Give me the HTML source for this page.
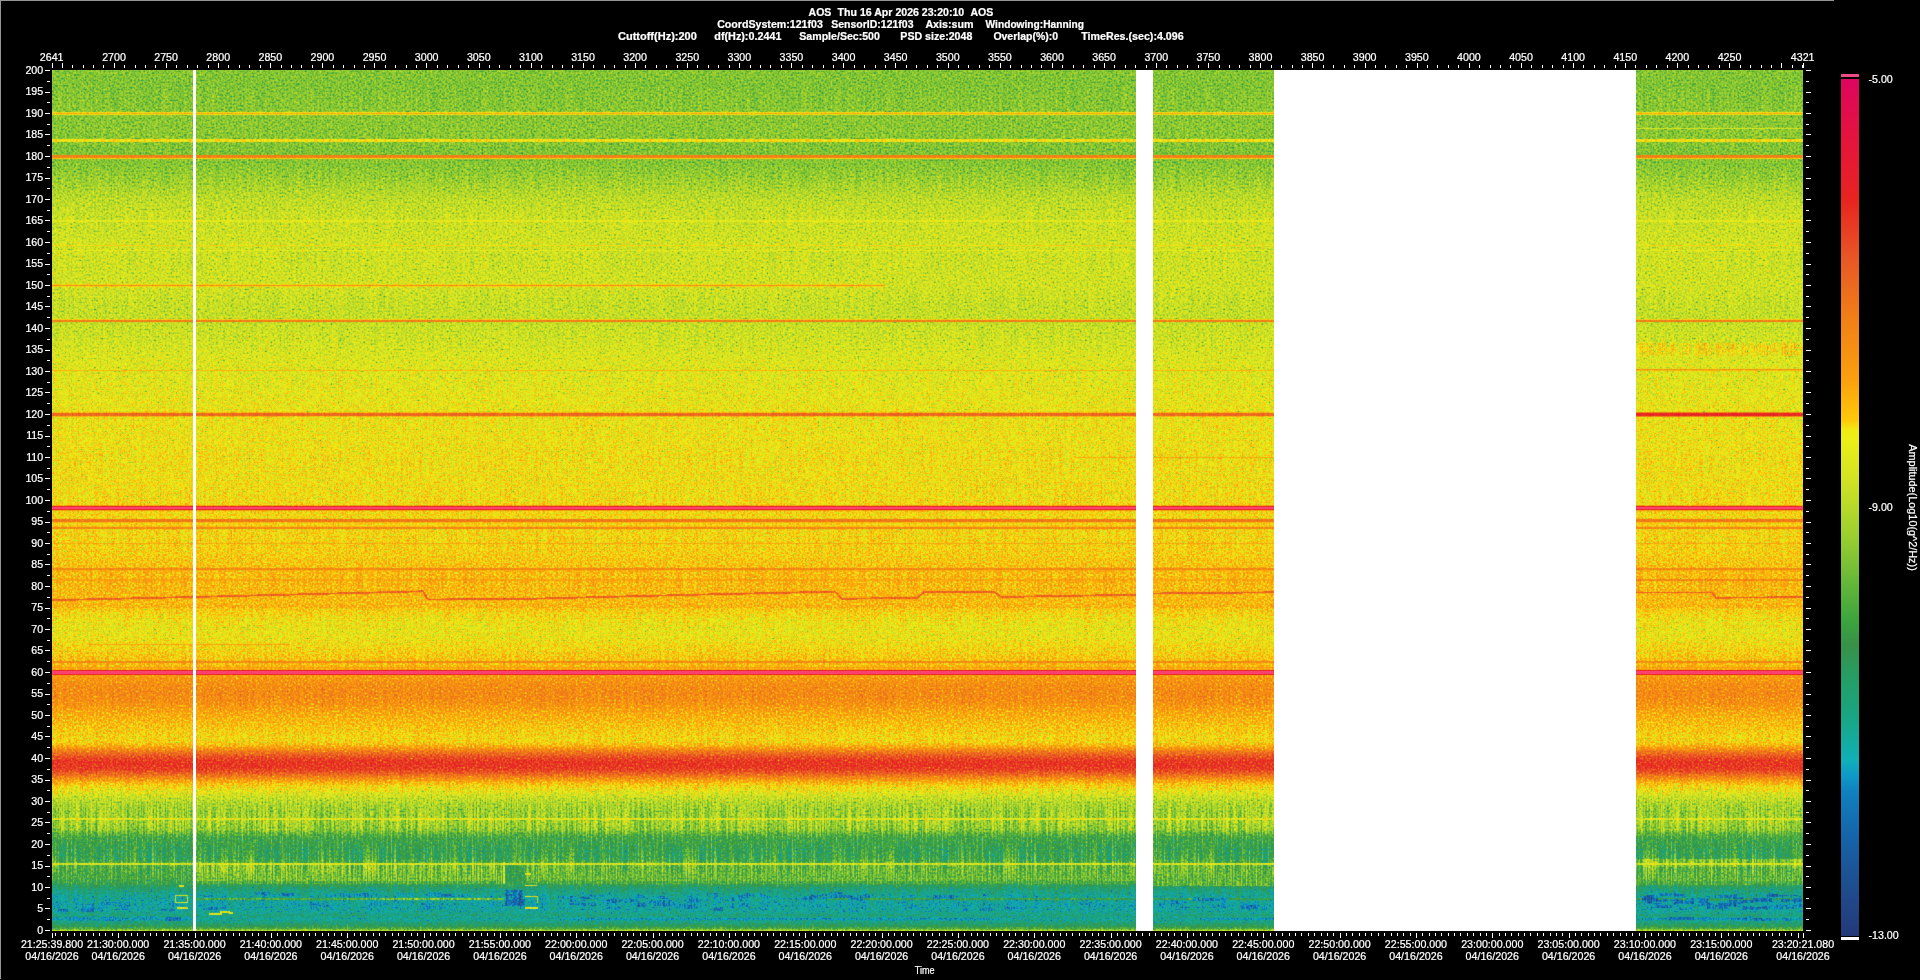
<!DOCTYPE html>
<html lang="en"><head><meta charset="utf-8"><title>AOS Spectrogram 121f03</title>
<style>html,body{margin:0;padding:0;background:#000;overflow:hidden}body{width:1920px;height:980px;position:relative}text{white-space:pre}</style>
</head><body>
<div id="specbg" style="position:absolute;left:52px;top:70px;width:1751px;height:861px;background:linear-gradient(to bottom,#7fc334 0.06%,#78c035 1.56%,#7ec234 3.55%,#82c433 7.05%,#78c035 9.55%,#7fc334 11.05%,#91cb31 12.54%,#a8d32c 14.04%,#b8d929 15.04%,#c5dd27 17.04%,#cce025 20.03%,#c8de26 21.53%,#cadf26 25.03%,#c0dc28 27.03%,#bedb28 29.02%,#c4dd27 30.02%,#cce025 31.52%,#d6e422 33.52%,#dae620 36.02%,#dfe81e 38.01%,#e1e91d 39.51%,#e3ea1c 41.01%,#e5eb1b 43.51%,#e7ec1a 45.01%,#e8ec1a 47.50%,#eaed19 50.00%,#eded17 51.50%,#eeec16 54.00%,#f0eb14 55.99%,#fccf0c 56.99%,#fec10b 57.99%,#fdbb0b 59.49%,#febd0b 60.99%,#fec20b 61.99%,#eeec16 62.98%,#e6eb1b 63.98%,#e1e91d 64.98%,#e3ea1c 65.98%,#e9ed19 66.73%,#efec15 67.48%,#fecc0b 68.48%,#fdba0b 69.48%,#f99d0f 70.48%,#f69212 71.48%,#f58e13 72.47%,#f79411 73.47%,#fba60d 74.47%,#fdba0b 75.47%,#f9d60e 76.47%,#eeed16 77.47%,#efec15 78.07%,#fcac0d 78.57%,#f28515 79.07%,#ea5f23 79.67%,#e84023 80.21%,#e73922 80.71%,#e84524 81.21%,#eb6720 81.71%,#f48c13 82.21%,#fcb40c 82.71%,#eded17 83.21%,#e2e91d 83.71%,#d2e224 84.21%,#bbda29 84.71%,#a7d32d 85.21%,#98ce30 85.96%,#98ce30 86.71%,#9dcf2f 87.01%,#a0d02e 87.31%,#8dc932 88.21%,#54b03b 88.70%,#3a9b43 89.20%,#35934d 90.45%,#379149 91.45%,#3ba040 91.85%,#4ead3c 92.25%,#45a93d 92.95%,#3ba240 93.95%,#329552 94.55%,#1fa276 95.05%,#16a892 95.70%,#13aca6 96.20%,#11aeb0 96.95%,#13aca4 97.69%,#1aa581 98.19%,#13aca3 98.64%,#1da379 99.09%,#2e9858 99.49%,#49ab3c 99.77%,#b1d62b 99.94%)"></div>
<svg id="spec" width="1751" height="861" viewBox="52 70 1751 861" style="position:absolute;left:52px;top:70px;display:block" shape-rendering="crispEdges">
<defs>
<linearGradient id="bg" gradientUnits="userSpaceOnUse" x1="0" y1="70" x2="0" y2="931"><stop offset="0.0006" stop-color="#72800d"/><stop offset="0.0156" stop-color="#70800d"/><stop offset="0.0355" stop-color="#72800d"/><stop offset="0.0705" stop-color="#73800d"/><stop offset="0.0955" stop-color="#70800d"/><stop offset="0.1105" stop-color="#72800d"/><stop offset="0.1254" stop-color="#77800d"/><stop offset="0.1404" stop-color="#7e800d"/><stop offset="0.1504" stop-color="#82800d"/><stop offset="0.1704" stop-color="#86800d"/><stop offset="0.2003" stop-color="#88800d"/><stop offset="0.2153" stop-color="#87800d"/><stop offset="0.2503" stop-color="#88800d"/><stop offset="0.2703" stop-color="#85800d"/><stop offset="0.2902" stop-color="#84800d"/><stop offset="0.3002" stop-color="#86800d"/><stop offset="0.3152" stop-color="#88800d"/><stop offset="0.3352" stop-color="#8c800d"/><stop offset="0.3602" stop-color="#8e800d"/><stop offset="0.3801" stop-color="#90800d"/><stop offset="0.3951" stop-color="#91800d"/><stop offset="0.4101" stop-color="#92800d"/><stop offset="0.4351" stop-color="#93800d"/><stop offset="0.4501" stop-color="#94800d"/><stop offset="0.4750" stop-color="#94800d"/><stop offset="0.5000" stop-color="#95800d"/><stop offset="0.5150" stop-color="#97800d"/><stop offset="0.5400" stop-color="#97800d"/><stop offset="0.5599" stop-color="#99800d"/><stop offset="0.5699" stop-color="#9b800d"/><stop offset="0.5799" stop-color="#9e800d"/><stop offset="0.5949" stop-color="#a0800d"/><stop offset="0.6099" stop-color="#9f800d"/><stop offset="0.6199" stop-color="#9e800d"/><stop offset="0.6298" stop-color="#98800d"/><stop offset="0.6398" stop-color="#93800d"/><stop offset="0.6498" stop-color="#91800d"/><stop offset="0.6598" stop-color="#92800d"/><stop offset="0.6673" stop-color="#95800d"/><stop offset="0.6748" stop-color="#98800d"/><stop offset="0.6848" stop-color="#9c800d"/><stop offset="0.6948" stop-color="#a0800d"/><stop offset="0.7048" stop-color="#aa800d"/><stop offset="0.7148" stop-color="#b0800d"/><stop offset="0.7247" stop-color="#b2800d"/><stop offset="0.7347" stop-color="#af800d"/><stop offset="0.7447" stop-color="#a6800d"/><stop offset="0.7547" stop-color="#a0800d"/><stop offset="0.7647" stop-color="#9b800d"/><stop offset="0.7747" stop-color="#97800d"/><stop offset="0.7807" stop-color="#98800d"/><stop offset="0.7857" stop-color="#a4800d"/><stop offset="0.7907" stop-color="#b7800d"/><stop offset="0.7967" stop-color="#c9800d"/><stop offset="0.8021" stop-color="#d4800d"/><stop offset="0.8071" stop-color="#d6800d"/><stop offset="0.8121" stop-color="#d2800d"/><stop offset="0.8171" stop-color="#c5800d"/><stop offset="0.8221" stop-color="#b3800d"/><stop offset="0.8271" stop-color="#a2800d"/><stop offset="0.8321" stop-color="#978014"/><stop offset="0.8371" stop-color="#91801a"/><stop offset="0.8421" stop-color="#8a8022"/><stop offset="0.8471" stop-color="#838026"/><stop offset="0.8521" stop-color="#7d802b"/><stop offset="0.8596" stop-color="#79802b"/><stop offset="0.8671" stop-color="#79802b"/><stop offset="0.8701" stop-color="#7a802b"/><stop offset="0.8731" stop-color="#7b802b"/><stop offset="0.8821" stop-color="#768030"/><stop offset="0.8870" stop-color="#678034"/><stop offset="0.8920" stop-color="#5d8034"/><stop offset="0.9045" stop-color="#578034"/><stop offset="0.9145" stop-color="#598034"/><stop offset="0.9185" stop-color="#5f8034"/><stop offset="0.9225" stop-color="#658034"/><stop offset="0.9295" stop-color="#638034"/><stop offset="0.9395" stop-color="#5f8034"/><stop offset="0.9455" stop-color="#568030"/><stop offset="0.9505" stop-color="#498020"/><stop offset="0.9570" stop-color="#40801a"/><stop offset="0.9620" stop-color="#3b8017"/><stop offset="0.9695" stop-color="#398017"/><stop offset="0.9769" stop-color="#3c8017"/><stop offset="0.9819" stop-color="#458017"/><stop offset="0.9864" stop-color="#3c8017"/><stop offset="0.9909" stop-color="#488017"/><stop offset="0.9949" stop-color="#548017"/><stop offset="0.9977" stop-color="#648013"/><stop offset="0.9994" stop-color="#808013"/></linearGradient>
<filter id="cm" filterUnits="userSpaceOnUse" x="48" y="66" width="1759" height="869" color-interpolation-filters="sRGB">
<feTurbulence type="fractalNoise" baseFrequency="0.55" numOctaves="1" seed="7" result="t"/>
<feColorMatrix in="t" type="matrix" values="1 0 0 0 0 1 0 0 0 0 1 0 0 0 0 0 0 0 0 1" result="t1"/>
<feComponentTransfer in="t1" result="n"><feFuncR type="table" tableValues="0.2540 0.2540 0.2540 0.2540 0.2540 0.2540 0.2540 0.2540 0.2540 0.2540 0.2540 0.2716 0.3006 0.3200 0.3396 0.3559 0.3712 0.3867 0.4019 0.4141 0.4244 0.4337 0.4416 0.4485 0.4550 0.4611 0.4667 0.4723 0.4780 0.4842 0.4900 0.4954 0.5005 0.5048 0.5096 0.5147 0.5198 0.5241 0.5279 0.5315 0.5354 0.5392 0.5430 0.5469 0.5514 0.5561 0.5612 0.5667 0.5720 0.5764 0.5812 0.5854 0.5903 0.5958 0.6025 0.6025 0.6025 0.6025 0.6025 0.6025 0.6025 0.6025 0.6025 0.6025 0.6025"/><feFuncG type="table" tableValues="0.2540 0.2540 0.2540 0.2540 0.2540 0.2540 0.2540 0.2540 0.2540 0.2540 0.2540 0.2716 0.3006 0.3200 0.3396 0.3559 0.3712 0.3867 0.4019 0.4141 0.4244 0.4337 0.4416 0.4485 0.4550 0.4611 0.4667 0.4723 0.4780 0.4842 0.4900 0.4954 0.5005 0.5048 0.5096 0.5147 0.5198 0.5241 0.5279 0.5315 0.5354 0.5392 0.5430 0.5469 0.5514 0.5561 0.5612 0.5667 0.5720 0.5764 0.5812 0.5854 0.5903 0.5958 0.6025 0.6025 0.6025 0.6025 0.6025 0.6025 0.6025 0.6025 0.6025 0.6025 0.6025"/><feFuncB type="table" tableValues="0.2540 0.2540 0.2540 0.2540 0.2540 0.2540 0.2540 0.2540 0.2540 0.2540 0.2540 0.2716 0.3006 0.3200 0.3396 0.3559 0.3712 0.3867 0.4019 0.4141 0.4244 0.4337 0.4416 0.4485 0.4550 0.4611 0.4667 0.4723 0.4780 0.4842 0.4900 0.4954 0.5005 0.5048 0.5096 0.5147 0.5198 0.5241 0.5279 0.5315 0.5354 0.5392 0.5430 0.5469 0.5514 0.5561 0.5612 0.5667 0.5720 0.5764 0.5812 0.5854 0.5903 0.5958 0.6025 0.6025 0.6025 0.6025 0.6025 0.6025 0.6025 0.6025 0.6025 0.6025 0.6025"/></feComponentTransfer>
<feColorMatrix in="SourceGraphic" type="matrix" values="1 0 0 0 0 1 0 0 0 0 1 0 0 0 0 0 0 0 0 1" result="A"/>
<feColorMatrix in="SourceGraphic" type="matrix" values="0 1 0 0 0 0 1 0 0 0 0 1 0 0 0 0 0 0 0 1" result="G"/>
<feComposite in="G" in2="n" operator="arithmetic" k1="2" k2="-1" k3="0" k4="0.5" result="M"/>
<feComposite in="A" in2="M" operator="arithmetic" k1="0" k2="1" k3="1" k4="-0.5" result="v1"/>
<feTurbulence type="fractalNoise" baseFrequency="0.8 0.025" numOctaves="1" seed="11" result="s0"/>
<feColorMatrix in="s0" type="matrix" values="1 0 0 0 0 1 0 0 0 0 1 0 0 0 0 0 0 0 0 1" result="s"/>
<feColorMatrix in="SourceGraphic" type="matrix" values="0 0 1 0 0 0 0 1 0 0 0 0 1 0 0 0 0 0 0 1" result="Bc"/>
<feComposite in="Bc" in2="s" operator="arithmetic" k1="2" k2="-1" k3="0" k4="0.5" result="S"/>
<feComposite in="v1" in2="S" operator="arithmetic" k1="0" k2="1" k3="1" k4="-0.5" result="v"/>
<feComponentTransfer in="v" result="c"><feFuncR type="table" tableValues="0.141 0.138 0.135 0.131 0.128 0.125 0.122 0.119 0.116 0.113 0.109 0.104 0.099 0.093 0.088 0.083 0.078 0.075 0.073 0.070 0.067 0.065 0.062 0.059 0.055 0.058 0.062 0.066 0.072 0.077 0.082 0.087 0.093 0.100 0.108 0.116 0.124 0.131 0.139 0.153 0.168 0.183 0.198 0.213 0.222 0.226 0.230 0.234 0.258 0.287 0.316 0.345 0.374 0.403 0.433 0.463 0.493 0.523 0.554 0.584 0.611 0.637 0.663 0.689 0.716 0.742 0.768 0.794 0.821 0.839 0.856 0.873 0.890 0.907 0.924 0.935 0.958 0.997 0.997 0.994 0.990 0.987 0.984 0.981 0.977 0.973 0.969 0.965 0.961 0.957 0.953 0.949 0.945 0.941 0.937 0.933 0.929 0.925 0.921 0.918 0.914 0.910 0.909 0.909 0.908 0.908 0.908 0.907 0.907 0.906 0.906 0.904 0.903 0.902 0.901 0.899 0.898 0.897 0.895 0.894 0.891 0.889 0.886 0.884 0.881 0.878 0.876 0.873 0.871"/><feFuncG type="table" tableValues="0.227 0.237 0.247 0.257 0.268 0.278 0.289 0.299 0.310 0.320 0.331 0.344 0.358 0.371 0.384 0.397 0.411 0.428 0.445 0.462 0.479 0.496 0.518 0.562 0.606 0.643 0.680 0.686 0.679 0.672 0.666 0.659 0.653 0.647 0.642 0.637 0.631 0.626 0.621 0.612 0.602 0.593 0.583 0.573 0.580 0.601 0.622 0.643 0.658 0.671 0.684 0.697 0.710 0.723 0.736 0.749 0.763 0.776 0.789 0.802 0.812 0.821 0.830 0.839 0.849 0.858 0.867 0.876 0.885 0.893 0.901 0.909 0.917 0.925 0.933 0.926 0.883 0.791 0.760 0.734 0.707 0.681 0.655 0.629 0.614 0.600 0.586 0.572 0.558 0.544 0.530 0.516 0.502 0.485 0.467 0.450 0.432 0.415 0.397 0.380 0.362 0.344 0.322 0.299 0.276 0.253 0.231 0.208 0.185 0.162 0.141 0.134 0.127 0.120 0.113 0.106 0.099 0.092 0.085 0.078 0.071 0.065 0.058 0.052 0.045 0.039 0.033 0.026 0.020"/><feFuncB type="table" tableValues="0.471 0.484 0.497 0.509 0.521 0.532 0.544 0.555 0.567 0.578 0.590 0.605 0.619 0.634 0.648 0.662 0.677 0.690 0.703 0.716 0.729 0.742 0.756 0.770 0.784 0.758 0.730 0.698 0.665 0.633 0.600 0.567 0.534 0.511 0.491 0.472 0.452 0.432 0.412 0.389 0.365 0.341 0.317 0.293 0.277 0.266 0.256 0.245 0.240 0.236 0.232 0.228 0.224 0.220 0.215 0.210 0.205 0.200 0.194 0.189 0.184 0.178 0.173 0.168 0.163 0.157 0.152 0.147 0.142 0.134 0.126 0.118 0.111 0.103 0.095 0.084 0.067 0.041 0.042 0.044 0.047 0.050 0.052 0.055 0.058 0.062 0.065 0.069 0.072 0.076 0.079 0.083 0.086 0.093 0.100 0.107 0.114 0.121 0.128 0.135 0.142 0.149 0.146 0.144 0.141 0.138 0.136 0.133 0.131 0.128 0.126 0.139 0.151 0.163 0.175 0.188 0.200 0.212 0.224 0.237 0.252 0.267 0.282 0.297 0.312 0.327 0.342 0.357 0.373"/><feFuncA type="linear" slope="0" intercept="1"/></feComponentTransfer>
<feConvolveMatrix order="3" divisor="1" preserveAlpha="true" edgeMode="duplicate" kernelMatrix="0.0250 0.0750 0.0250 0.0750 0.6000 0.0750 0.0250 0.0750 0.0250"/>
</filter>
</defs>
<g filter="url(#cm)">
<rect x="48" y="66" width="1759" height="869" fill="url(#bg)"/>
<rect x="196.0" y="864.64" width="308.0" height="7.31" fill="#728046"/>
<rect x="196.0" y="871.95" width="308.0" height="8.60" fill="#6f8046"/>
<rect x="196.0" y="880.55" width="308.0" height="3.87" fill="#628039"/>
<rect x="504.0" y="864.64" width="770.0" height="15.91" fill="#6a8039"/>
<rect x="504.0" y="880.55" width="770.0" height="3.87" fill="#608033"/>
<rect x="1153.0" y="876.25" width="121.0" height="9.89" fill="#688040"/>
<rect x="1636.0" y="859.48" width="167.0" height="7.74" fill="#738039"/>
<rect x="1636.0" y="867.22" width="167.0" height="13.33" fill="#688046"/>
<rect x="1636.0" y="880.55" width="167.0" height="4.30" fill="#608039"/>
<rect x="196.0" y="898.18" width="169.0" height="1.72" fill="#61661a"/>
<rect x="365.0" y="897.97" width="139.0" height="2.15" fill="#6e8026"/>
<rect x="828.0" y="898.18" width="446.0" height="1.72" fill="#58661a"/>
<rect x="1636.0" y="898.18" width="167.0" height="1.72" fill="#52661a"/>
<rect x="52.0" y="917.53" width="141.0" height="2.58" fill="#30801a"/>
<rect x="560.0" y="917.53" width="440.0" height="2.58" fill="#30801a"/>
<rect x="1200.0" y="917.53" width="74.0" height="2.58" fill="#30801a"/>
<rect x="1640.0" y="917.53" width="163.0" height="2.58" fill="#30801a"/>
<rect x="1636.0" y="342.62" width="167.0" height="13.76" fill="#928026"/>
<rect x="1636.0" y="346.06" width="167.0" height="6.88" fill="#948026"/>
<rect x="960.0" y="481.51" width="314.0" height="6.88" fill="#95801a"/>
<rect x="505.0" y="864.00" width="21.0" height="20.00" fill="#578026"/>
<rect x="503.0" y="862.00" width="2.0" height="22.00" fill="#8b4c13"/>
<rect x="505.0" y="890.00" width="18.0" height="16.00" fill="#24b226"/>
<rect x="525.0" y="873.30" width="6.0" height="1.50" fill="#8f4c13"/>
<rect x="525.0" y="884.50" width="12.0" height="1.50" fill="#8f4c13"/>
<rect x="525.0" y="895.60" width="13.0" height="1.60" fill="#914c13"/>
<rect x="536.5" y="896.00" width="1.5" height="7.00" fill="#8b4c13"/>
<rect x="525.0" y="907.00" width="13.0" height="1.60" fill="#914c13"/>
<rect x="174.5" y="894.60" width="13.5" height="1.40" fill="#8b4c13"/>
<rect x="174.5" y="902.00" width="13.5" height="1.40" fill="#8b4c13"/>
<rect x="174.5" y="895.00" width="1.3" height="8.00" fill="#884c13"/>
<rect x="186.8" y="895.00" width="1.2" height="8.00" fill="#884c13"/>
<rect x="177.0" y="907.00" width="11.0" height="1.50" fill="#8f4c13"/>
<rect x="179.0" y="885.00" width="5.0" height="1.60" fill="#8b4c13"/>
<rect x="209.0" y="912.50" width="13.0" height="2.50" fill="#914c13"/>
<rect x="220.0" y="910.50" width="10.0" height="2.00" fill="#8f4c13"/>
<rect x="229.0" y="912.00" width="4.0" height="1.50" fill="#884c13"/>
<rect x="113.5" y="906.67" width="18.7" height="3.42" fill="#348020"/>
<rect x="57.7" y="909.11" width="11.5" height="2.47" fill="#268020"/>
<rect x="105.0" y="902.25" width="16.1" height="2.06" fill="#278020"/>
<rect x="110.5" y="904.46" width="19.4" height="2.43" fill="#338020"/>
<rect x="160.7" y="909.30" width="14.4" height="2.15" fill="#2a8020"/>
<rect x="157.8" y="903.05" width="19.8" height="2.04" fill="#348020"/>
<rect x="112.9" y="906.77" width="17.0" height="1.51" fill="#318020"/>
<rect x="92.3" y="907.56" width="10.5" height="3.41" fill="#2a8020"/>
<rect x="81.5" y="906.47" width="12.6" height="3.39" fill="#288020"/>
<rect x="81.4" y="909.13" width="13.6" height="2.70" fill="#268020"/>
<rect x="100.4" y="902.36" width="6.5" height="3.50" fill="#2e8020"/>
<rect x="80.1" y="903.88" width="20.9" height="2.82" fill="#2a8020"/>
<rect x="78.9" y="904.67" width="16.6" height="2.60" fill="#338020"/>
<rect x="97.6" y="903.44" width="16.8" height="3.01" fill="#318020"/>
<rect x="100.1" y="916.75" width="11.6" height="3.39" fill="#2a8020"/>
<rect x="136.7" y="916.49" width="21.0" height="3.85" fill="#318020"/>
<rect x="100.5" y="916.98" width="17.1" height="3.51" fill="#2c8020"/>
<rect x="98.9" y="919.14" width="21.3" height="2.26" fill="#2d8020"/>
<rect x="164.9" y="917.21" width="15.7" height="3.72" fill="#248020"/>
<rect x="72.4" y="917.26" width="8.2" height="3.45" fill="#328020"/>
<rect x="68.6" y="917.04" width="19.6" height="3.47" fill="#2f8020"/>
<rect x="65.2" y="916.56" width="13.4" height="2.81" fill="#2f8020"/>
<rect x="200.8" y="894.99" width="12.6" height="1.64" fill="#2e8020"/>
<rect x="336.1" y="893.01" width="20.8" height="3.61" fill="#298020"/>
<rect x="425.7" y="893.88" width="19.6" height="2.30" fill="#2a8020"/>
<rect x="397.9" y="892.91" width="17.5" height="2.69" fill="#338020"/>
<rect x="263.7" y="894.79" width="5.7" height="1.86" fill="#328020"/>
<rect x="461.7" y="893.61" width="8.7" height="2.93" fill="#2d8020"/>
<rect x="429.2" y="892.28" width="12.1" height="3.11" fill="#2d8020"/>
<rect x="436.5" y="894.35" width="17.0" height="2.31" fill="#268020"/>
<rect x="355.4" y="893.49" width="13.6" height="3.22" fill="#2c8020"/>
<rect x="358.0" y="894.02" width="5.9" height="1.61" fill="#268020"/>
<rect x="346.5" y="893.10" width="5.3" height="2.82" fill="#288020"/>
<rect x="342.7" y="893.05" width="13.9" height="2.84" fill="#2f8020"/>
<rect x="255.3" y="892.18" width="14.4" height="3.10" fill="#288020"/>
<rect x="325.4" y="894.35" width="21.2" height="2.20" fill="#328020"/>
<rect x="457.3" y="894.73" width="5.3" height="2.09" fill="#298020"/>
<rect x="256.7" y="893.29" width="9.2" height="1.66" fill="#2b8020"/>
<rect x="279.5" y="893.48" width="14.3" height="2.58" fill="#258020"/>
<rect x="274.2" y="893.71" width="8.4" height="3.24" fill="#2e8020"/>
<rect x="308.6" y="906.07" width="6.6" height="3.72" fill="#368020"/>
<rect x="324.4" y="904.67" width="6.0" height="2.01" fill="#278020"/>
<rect x="373.6" y="902.56" width="20.1" height="2.08" fill="#348020"/>
<rect x="422.4" y="906.22" width="19.5" height="2.44" fill="#2d8020"/>
<rect x="420.6" y="903.26" width="13.6" height="1.75" fill="#2f8020"/>
<rect x="309.4" y="902.63" width="11.6" height="3.75" fill="#308020"/>
<rect x="217.6" y="906.56" width="11.3" height="2.36" fill="#328020"/>
<rect x="331.7" y="907.72" width="6.1" height="2.79" fill="#348020"/>
<rect x="305.8" y="902.38" width="20.6" height="1.82" fill="#348020"/>
<rect x="205.6" y="906.90" width="12.0" height="3.40" fill="#288020"/>
<rect x="507.9" y="901.87" width="13.9" height="2.12" fill="#178020"/>
<rect x="506.4" y="902.85" width="17.3" height="1.67" fill="#1e8020"/>
<rect x="505.4" y="900.36" width="14.6" height="3.19" fill="#1e8020"/>
<rect x="513.4" y="900.38" width="10.0" height="3.12" fill="#1d8020"/>
<rect x="519.3" y="899.34" width="5.9" height="2.37" fill="#1c8020"/>
<rect x="511.3" y="901.23" width="12.9" height="2.85" fill="#1f8020"/>
<rect x="675.1" y="905.01" width="20.1" height="2.69" fill="#248020"/>
<rect x="671.9" y="905.17" width="13.0" height="2.63" fill="#288020"/>
<rect x="666.9" y="902.15" width="9.2" height="2.32" fill="#248020"/>
<rect x="688.7" y="898.20" width="5.2" height="3.87" fill="#2d8020"/>
<rect x="606.2" y="906.96" width="16.2" height="1.95" fill="#2f8020"/>
<rect x="670.9" y="904.33" width="7.7" height="1.94" fill="#248020"/>
<rect x="568.2" y="895.63" width="5.1" height="1.64" fill="#248020"/>
<rect x="590.5" y="902.77" width="5.3" height="3.71" fill="#278020"/>
<rect x="608.2" y="899.38" width="8.5" height="3.81" fill="#278020"/>
<rect x="689.2" y="899.34" width="9.8" height="3.24" fill="#2f8020"/>
<rect x="619.4" y="898.73" width="18.7" height="3.08" fill="#2c8020"/>
<rect x="568.9" y="899.64" width="10.2" height="2.72" fill="#2d8020"/>
<rect x="636.8" y="903.05" width="9.3" height="3.63" fill="#268020"/>
<rect x="654.3" y="902.08" width="21.9" height="3.63" fill="#278020"/>
<rect x="646.6" y="900.92" width="14.9" height="1.71" fill="#288020"/>
<rect x="586.0" y="894.90" width="17.5" height="1.69" fill="#2b8020"/>
<rect x="600.8" y="900.43" width="9.3" height="1.67" fill="#2f8020"/>
<rect x="580.0" y="897.34" width="9.9" height="2.11" fill="#228020"/>
<rect x="567.9" y="902.60" width="20.6" height="2.55" fill="#288020"/>
<rect x="655.5" y="895.92" width="11.5" height="3.23" fill="#298020"/>
<rect x="675.8" y="904.31" width="9.1" height="3.66" fill="#2d8020"/>
<rect x="678.8" y="905.68" width="16.2" height="3.45" fill="#2d8020"/>
<rect x="659.5" y="899.98" width="12.2" height="2.81" fill="#288020"/>
<rect x="636.3" y="895.37" width="9.1" height="3.04" fill="#2d8020"/>
<rect x="603.3" y="901.46" width="7.1" height="2.34" fill="#2d8020"/>
<rect x="560.8" y="895.74" width="17.0" height="3.45" fill="#2f8020"/>
<rect x="822.9" y="896.82" width="10.2" height="2.66" fill="#2a8020"/>
<rect x="746.3" y="895.31" width="19.3" height="2.04" fill="#328020"/>
<rect x="932.9" y="895.15" width="21.0" height="3.52" fill="#298020"/>
<rect x="730.6" y="897.95" width="11.7" height="2.59" fill="#2a8020"/>
<rect x="864.8" y="894.21" width="8.3" height="3.77" fill="#278020"/>
<rect x="763.7" y="895.99" width="10.1" height="1.53" fill="#328020"/>
<rect x="809.4" y="895.68" width="9.8" height="3.25" fill="#318020"/>
<rect x="748.3" y="892.90" width="14.0" height="3.86" fill="#298020"/>
<rect x="848.1" y="897.37" width="15.2" height="2.79" fill="#2c8020"/>
<rect x="829.8" y="895.15" width="21.8" height="3.23" fill="#278020"/>
<rect x="982.4" y="894.45" width="5.1" height="1.98" fill="#288020"/>
<rect x="853.3" y="894.75" width="14.1" height="1.60" fill="#338020"/>
<rect x="717.8" y="896.80" width="13.2" height="3.73" fill="#338020"/>
<rect x="744.3" y="892.93" width="16.6" height="3.62" fill="#318020"/>
<rect x="733.6" y="894.92" width="14.2" height="3.31" fill="#278020"/>
<rect x="831.3" y="892.46" width="11.0" height="3.39" fill="#2e8020"/>
<rect x="795.3" y="898.07" width="19.0" height="1.68" fill="#2e8020"/>
<rect x="820.7" y="894.24" width="11.9" height="2.07" fill="#2c8020"/>
<rect x="906.2" y="895.29" width="9.1" height="3.19" fill="#2e8020"/>
<rect x="804.2" y="895.78" width="7.9" height="3.48" fill="#278020"/>
<rect x="810.8" y="895.37" width="10.2" height="1.97" fill="#2b8020"/>
<rect x="706.6" y="892.56" width="11.8" height="3.12" fill="#2e8020"/>
<rect x="816.8" y="904.46" width="12.6" height="2.56" fill="#2f8020"/>
<rect x="908.3" y="907.35" width="6.6" height="2.33" fill="#348020"/>
<rect x="1003.2" y="907.22" width="20.1" height="1.86" fill="#2e8020"/>
<rect x="905.4" y="907.16" width="16.5" height="1.55" fill="#2f8020"/>
<rect x="911.1" y="907.19" width="5.0" height="1.53" fill="#318020"/>
<rect x="988.7" y="904.46" width="7.0" height="2.37" fill="#2a8020"/>
<rect x="910.8" y="904.51" width="5.0" height="2.31" fill="#2d8020"/>
<rect x="730.2" y="903.44" width="18.6" height="3.13" fill="#2e8020"/>
<rect x="1079.9" y="903.35" width="15.3" height="2.12" fill="#318020"/>
<rect x="1022.6" y="905.82" width="13.3" height="1.65" fill="#328020"/>
<rect x="1087.3" y="904.38" width="19.1" height="2.80" fill="#348020"/>
<rect x="713.5" y="907.76" width="9.0" height="3.51" fill="#288020"/>
<rect x="841.3" y="909.58" width="18.8" height="2.11" fill="#348020"/>
<rect x="963.0" y="908.23" width="5.2" height="2.89" fill="#298020"/>
<rect x="980.0" y="907.85" width="13.3" height="2.92" fill="#2a8020"/>
<rect x="753.5" y="907.75" width="12.0" height="2.68" fill="#2f8020"/>
<rect x="1211.1" y="897.98" width="17.3" height="2.59" fill="#2e8020"/>
<rect x="1262.3" y="907.32" width="5.3" height="2.83" fill="#2d8020"/>
<rect x="1163.9" y="901.18" width="16.1" height="2.66" fill="#338020"/>
<rect x="1173.4" y="901.48" width="6.2" height="2.30" fill="#268020"/>
<rect x="1192.2" y="896.72" width="8.7" height="3.84" fill="#2d8020"/>
<rect x="1239.5" y="905.27" width="18.3" height="3.55" fill="#278020"/>
<rect x="1158.2" y="903.61" width="7.0" height="3.24" fill="#328020"/>
<rect x="1212.7" y="905.42" width="15.6" height="2.25" fill="#2e8020"/>
<rect x="1202.0" y="898.30" width="20.3" height="2.92" fill="#268020"/>
<rect x="1179.6" y="906.67" width="10.7" height="1.76" fill="#2e8020"/>
<rect x="1655.7" y="904.65" width="17.6" height="3.32" fill="#268020"/>
<rect x="1717.4" y="903.33" width="19.4" height="2.65" fill="#238020"/>
<rect x="1728.8" y="896.68" width="15.3" height="2.30" fill="#268020"/>
<rect x="1679.0" y="907.78" width="12.8" height="1.81" fill="#2b8020"/>
<rect x="1754.7" y="898.65" width="6.4" height="3.63" fill="#208020"/>
<rect x="1730.2" y="895.17" width="8.0" height="2.34" fill="#238020"/>
<rect x="1645.5" y="896.82" width="7.1" height="1.61" fill="#1e8020"/>
<rect x="1646.5" y="895.29" width="7.5" height="3.42" fill="#218020"/>
<rect x="1672.9" y="894.03" width="13.0" height="2.63" fill="#278020"/>
<rect x="1728.6" y="899.72" width="9.5" height="3.33" fill="#238020"/>
<rect x="1792.8" y="897.61" width="6.9" height="1.76" fill="#228020"/>
<rect x="1663.3" y="899.32" width="14.5" height="2.06" fill="#2b8020"/>
<rect x="1732.3" y="894.07" width="5.5" height="2.32" fill="#258020"/>
<rect x="1685.4" y="899.99" width="10.2" height="3.76" fill="#248020"/>
<rect x="1641.3" y="896.20" width="5.7" height="1.76" fill="#268020"/>
<rect x="1712.5" y="895.01" width="16.6" height="2.56" fill="#268020"/>
<rect x="1644.6" y="899.86" width="6.7" height="3.09" fill="#268020"/>
<rect x="1766.5" y="893.54" width="12.3" height="3.23" fill="#208020"/>
<rect x="1695.4" y="901.87" width="18.9" height="3.72" fill="#2b8020"/>
<rect x="1672.2" y="902.16" width="12.7" height="1.64" fill="#258020"/>
<rect x="1742.5" y="907.29" width="18.0" height="2.60" fill="#218020"/>
<rect x="1690.9" y="898.72" width="17.9" height="1.53" fill="#298020"/>
<rect x="1753.1" y="898.12" width="18.7" height="3.81" fill="#208020"/>
<rect x="1687.2" y="897.76" width="21.0" height="3.76" fill="#2a8020"/>
<rect x="1680.9" y="899.66" width="20.6" height="1.64" fill="#288020"/>
<rect x="1740.5" y="900.19" width="12.2" height="2.33" fill="#1f8020"/>
<rect x="1642.4" y="897.56" width="15.6" height="3.21" fill="#1e8020"/>
<rect x="1762.2" y="905.71" width="7.3" height="3.36" fill="#228020"/>
<rect x="1791.8" y="899.38" width="10.3" height="2.38" fill="#248020"/>
<rect x="1658.7" y="893.31" width="18.6" height="2.43" fill="#298020"/>
<rect x="1706.9" y="904.80" width="20.3" height="3.82" fill="#258020"/>
<rect x="1788.6" y="903.47" width="14.2" height="3.37" fill="#2b8020"/>
<rect x="1776.0" y="894.70" width="21.7" height="1.51" fill="#1e8020"/>
<rect x="1730.4" y="901.66" width="11.8" height="1.98" fill="#218020"/>
<rect x="1781.3" y="899.01" width="8.3" height="2.62" fill="#1e8020"/>
<rect x="1733.7" y="905.56" width="17.8" height="1.82" fill="#2a8020"/>
<rect x="1647.8" y="902.57" width="15.3" height="1.53" fill="#298020"/>
<rect x="1675.5" y="899.76" width="16.3" height="2.16" fill="#248020"/>
<rect x="1774.1" y="905.25" width="19.4" height="3.45" fill="#2b8020"/>
<rect x="1647.7" y="899.95" width="17.8" height="2.45" fill="#278020"/>
<rect x="1753.3" y="917.89" width="8.6" height="3.08" fill="#268020"/>
<rect x="1701.4" y="917.27" width="8.8" height="3.60" fill="#2d8020"/>
<rect x="1757.7" y="918.89" width="12.9" height="2.16" fill="#288020"/>
<rect x="1738.9" y="917.14" width="11.9" height="3.66" fill="#2e8020"/>
<rect x="1783.8" y="918.32" width="6.8" height="2.94" fill="#2a8020"/>
<rect x="1734.7" y="918.37" width="11.3" height="1.56" fill="#298020"/>
<rect x="1674.5" y="916.74" width="19.1" height="2.98" fill="#228020"/>
<rect x="1732.6" y="919.60" width="16.8" height="1.79" fill="#2c8020"/>
<rect x="1758.7" y="917.61" width="12.4" height="2.60" fill="#268020"/>
<rect x="1668.1" y="916.82" width="12.6" height="3.23" fill="#238020"/>
<rect x="52.0" y="111.70" width="1751.0" height="3.60" fill="#95290d"/>
<rect x="52.0" y="112.60" width="1751.0" height="1.80" fill="#a4290d"/>
<rect x="52.0" y="139.49" width="1751.0" height="2.20" fill="#96290d"/>
<rect x="52.0" y="154.50" width="1751.0" height="4.00" fill="#98290d"/>
<rect x="52.0" y="155.40" width="1751.0" height="2.20" fill="#b6290d"/>
<rect x="52.0" y="220.20" width="1751.0" height="1.60" fill="#90290d"/>
<rect x="52.0" y="244.71" width="1751.0" height="1.60" fill="#97290d"/>
<rect x="52.0" y="249.64" width="1751.0" height="1.20" fill="#91290d"/>
<rect x="52.0" y="284.20" width="833.0" height="2.60" fill="#97290d"/>
<rect x="52.0" y="284.80" width="833.0" height="1.40" fill="#b3290d"/>
<rect x="52.0" y="319.16" width="1751.0" height="3.20" fill="#98290d"/>
<rect x="52.0" y="319.86" width="1751.0" height="1.80" fill="#b8290d"/>
<rect x="52.0" y="369.61" width="1751.0" height="1.20" fill="#9e290d"/>
<rect x="52.0" y="412.30" width="1751.0" height="4.40" fill="#9e290d"/>
<rect x="52.0" y="413.30" width="1751.0" height="2.40" fill="#c2290d"/>
<rect x="52.0" y="518.51" width="1751.0" height="4.40" fill="#9e290d"/>
<rect x="52.0" y="519.21" width="1751.0" height="3.00" fill="#ba290d"/>
<rect x="52.0" y="525.99" width="1751.0" height="3.20" fill="#9d290d"/>
<rect x="52.0" y="526.59" width="1751.0" height="2.00" fill="#b3290d"/>
<rect x="52.0" y="542.90" width="1751.0" height="1.20" fill="#a3290d"/>
<rect x="52.0" y="567.70" width="1751.0" height="3.20" fill="#a1290d"/>
<rect x="52.0" y="568.30" width="1751.0" height="2.00" fill="#b3290d"/>
<rect x="52.0" y="578.80" width="1751.0" height="2.50" fill="#a5290d"/>
<rect x="52.0" y="604.05" width="1751.0" height="3.60" fill="#a1800d"/>
<rect x="90.0" y="643.95" width="200.0" height="1.20" fill="#a4290d"/>
<rect x="52.0" y="660.85" width="1751.0" height="1.80" fill="#b2290d"/>
<rect x="52.0" y="666.69" width="1751.0" height="1.30" fill="#a9290d"/>
<rect x="52.0" y="818.45" width="1751.0" height="1.80" fill="#8f660d"/>
<rect x="52.0" y="862.74" width="1751.0" height="1.80" fill="#8b660d"/>
<rect x="1636.0" y="412.00" width="167.0" height="5.00" fill="#b4290d"/>
<rect x="1636.0" y="412.80" width="167.0" height="3.40" fill="#db290d"/>
<rect x="1636.0" y="368.55" width="167.0" height="1.60" fill="#ae290d"/>
<rect x="1636.0" y="578.62" width="167.0" height="2.00" fill="#b3290d"/>
<rect x="1075.0" y="456.85" width="199.0" height="1.30" fill="#a4290d"/>
<rect x="1300.0" y="127.52" width="503.0" height="1.20" fill="#8b290d"/>
<rect x="52" y="505.00" width="1751" height="6.00" fill="#a4400d"/>
<rect x="52" y="506.00" width="1751" height="4.00" fill="#df260d"/>
<rect x="52" y="669.00" width="1751" height="7.00" fill="#a4400d"/>
<rect x="52" y="670.00" width="1751" height="5.00" fill="#df260d"/>
<polyline points="52.0,600.2 193.0,597.0 423.0,591.3 428.0,599.5 521.0,599.0 700.0,594.6 835.0,591.6 842.0,598.8 917.0,597.8 924.0,592.0 994.0,592.0 1001.0,597.0 1136.0,594.7 1153.0,593.5 1274.0,592.3 1636.0,592.5 1712.0,592.5 1716.0,597.7 1803.0,597.2" fill="none" stroke="#a1590d" stroke-width="3.6"/>
<polyline points="52.0,600.2 193.0,597.0 423.0,591.3 428.0,599.5 521.0,599.0 700.0,594.6 835.0,591.6 842.0,598.8 917.0,597.8 924.0,592.0 994.0,592.0 1001.0,597.0 1136.0,594.7 1153.0,593.5 1274.0,592.3 1636.0,592.5 1712.0,592.5 1716.0,597.7 1803.0,597.2" fill="none" stroke="#c5400d" stroke-width="1.8"/>
</g>
<rect x="52" y="507.00" width="1751" height="2.00" fill="#fc4070"/>
<rect x="52" y="671.00" width="1751" height="3.00" fill="#fc4070"/>
<rect x="193" y="70" width="3" height="861" fill="#fff"/>
<rect x="1136" y="70" width="17" height="861" fill="#fff"/>
<rect x="1274" y="70" width="362" height="861" fill="#fff"/>
</svg>
<div id="cbar" style="position:absolute;left:1841px;top:79px;width:18px;height:857px;background:linear-gradient(to bottom,#de055f 0.00%,#e4143c 7.12%,#e72420 14.12%,#e85826 21.12%,#f18016 28.12%,#faa00e 35.12%,#ffc80a 39.79%,#f0eb14 40.96%,#ecee18 42.12%,#d2e224 46.79%,#96cd30 53.79%,#68b938 58.46%,#3ca53e 63.13%,#389148 66.04%,#249e68 70.13%,#18a686 74.80%,#10b0b8 79.46%,#0e9bc8 81.21%,#1082c0 82.96%,#1468ac 87.63%,#1c5496 92.30%,#224080 98.13%,#243a78 100.00%)"></div>
<svg id="ov" width="1920" height="980" viewBox="0 0 1920 980" style="position:absolute;left:0;top:0;display:block;will-change:transform" font-family="'Liberation Sans', sans-serif" font-size="10.67px" fill="#fff" stroke="#fff" stroke-width="0.22">
<g shape-rendering="crispEdges" stroke="none">
<rect x="0.00" y="0.00" width="1834.00" height="1.00" fill="#969696"/>
<rect x="0.00" y="0.00" width="1.00" height="979.00" fill="#969696"/>
<rect x="52.00" y="63.00" width="1.00" height="5.00" fill="#fff"/>
<rect x="1803.00" y="63.00" width="1.00" height="5.00" fill="#fff"/>
<rect x="62.00" y="63.00" width="1.00" height="5.00" fill="#fff"/>
<rect x="72.00" y="65.00" width="1.00" height="3.00" fill="#fff"/>
<rect x="83.00" y="65.00" width="1.00" height="3.00" fill="#fff"/>
<rect x="93.00" y="65.00" width="1.00" height="3.00" fill="#fff"/>
<rect x="103.00" y="65.00" width="1.00" height="3.00" fill="#fff"/>
<rect x="114.00" y="63.00" width="1.00" height="5.00" fill="#fff"/>
<rect x="124.00" y="65.00" width="1.00" height="3.00" fill="#fff"/>
<rect x="135.00" y="65.00" width="1.00" height="3.00" fill="#fff"/>
<rect x="145.00" y="65.00" width="1.00" height="3.00" fill="#fff"/>
<rect x="155.00" y="65.00" width="1.00" height="3.00" fill="#fff"/>
<rect x="166.00" y="63.00" width="1.00" height="5.00" fill="#fff"/>
<rect x="176.00" y="65.00" width="1.00" height="3.00" fill="#fff"/>
<rect x="187.00" y="65.00" width="1.00" height="3.00" fill="#fff"/>
<rect x="197.00" y="65.00" width="1.00" height="3.00" fill="#fff"/>
<rect x="208.00" y="65.00" width="1.00" height="3.00" fill="#fff"/>
<rect x="218.00" y="63.00" width="1.00" height="5.00" fill="#fff"/>
<rect x="228.00" y="65.00" width="1.00" height="3.00" fill="#fff"/>
<rect x="239.00" y="65.00" width="1.00" height="3.00" fill="#fff"/>
<rect x="249.00" y="65.00" width="1.00" height="3.00" fill="#fff"/>
<rect x="260.00" y="65.00" width="1.00" height="3.00" fill="#fff"/>
<rect x="270.00" y="63.00" width="1.00" height="5.00" fill="#fff"/>
<rect x="281.00" y="65.00" width="1.00" height="3.00" fill="#fff"/>
<rect x="291.00" y="65.00" width="1.00" height="3.00" fill="#fff"/>
<rect x="301.00" y="65.00" width="1.00" height="3.00" fill="#fff"/>
<rect x="312.00" y="65.00" width="1.00" height="3.00" fill="#fff"/>
<rect x="322.00" y="63.00" width="1.00" height="5.00" fill="#fff"/>
<rect x="333.00" y="65.00" width="1.00" height="3.00" fill="#fff"/>
<rect x="343.00" y="65.00" width="1.00" height="3.00" fill="#fff"/>
<rect x="354.00" y="65.00" width="1.00" height="3.00" fill="#fff"/>
<rect x="364.00" y="65.00" width="1.00" height="3.00" fill="#fff"/>
<rect x="374.00" y="63.00" width="1.00" height="5.00" fill="#fff"/>
<rect x="385.00" y="65.00" width="1.00" height="3.00" fill="#fff"/>
<rect x="395.00" y="65.00" width="1.00" height="3.00" fill="#fff"/>
<rect x="406.00" y="65.00" width="1.00" height="3.00" fill="#fff"/>
<rect x="416.00" y="65.00" width="1.00" height="3.00" fill="#fff"/>
<rect x="426.00" y="63.00" width="1.00" height="5.00" fill="#fff"/>
<rect x="437.00" y="65.00" width="1.00" height="3.00" fill="#fff"/>
<rect x="447.00" y="65.00" width="1.00" height="3.00" fill="#fff"/>
<rect x="458.00" y="65.00" width="1.00" height="3.00" fill="#fff"/>
<rect x="468.00" y="65.00" width="1.00" height="3.00" fill="#fff"/>
<rect x="479.00" y="63.00" width="1.00" height="5.00" fill="#fff"/>
<rect x="489.00" y="65.00" width="1.00" height="3.00" fill="#fff"/>
<rect x="499.00" y="65.00" width="1.00" height="3.00" fill="#fff"/>
<rect x="510.00" y="65.00" width="1.00" height="3.00" fill="#fff"/>
<rect x="520.00" y="65.00" width="1.00" height="3.00" fill="#fff"/>
<rect x="531.00" y="63.00" width="1.00" height="5.00" fill="#fff"/>
<rect x="541.00" y="65.00" width="1.00" height="3.00" fill="#fff"/>
<rect x="552.00" y="65.00" width="1.00" height="3.00" fill="#fff"/>
<rect x="562.00" y="65.00" width="1.00" height="3.00" fill="#fff"/>
<rect x="572.00" y="65.00" width="1.00" height="3.00" fill="#fff"/>
<rect x="583.00" y="63.00" width="1.00" height="5.00" fill="#fff"/>
<rect x="593.00" y="65.00" width="1.00" height="3.00" fill="#fff"/>
<rect x="604.00" y="65.00" width="1.00" height="3.00" fill="#fff"/>
<rect x="614.00" y="65.00" width="1.00" height="3.00" fill="#fff"/>
<rect x="625.00" y="65.00" width="1.00" height="3.00" fill="#fff"/>
<rect x="635.00" y="63.00" width="1.00" height="5.00" fill="#fff"/>
<rect x="645.00" y="65.00" width="1.00" height="3.00" fill="#fff"/>
<rect x="656.00" y="65.00" width="1.00" height="3.00" fill="#fff"/>
<rect x="666.00" y="65.00" width="1.00" height="3.00" fill="#fff"/>
<rect x="677.00" y="65.00" width="1.00" height="3.00" fill="#fff"/>
<rect x="687.00" y="63.00" width="1.00" height="5.00" fill="#fff"/>
<rect x="697.00" y="65.00" width="1.00" height="3.00" fill="#fff"/>
<rect x="708.00" y="65.00" width="1.00" height="3.00" fill="#fff"/>
<rect x="718.00" y="65.00" width="1.00" height="3.00" fill="#fff"/>
<rect x="729.00" y="65.00" width="1.00" height="3.00" fill="#fff"/>
<rect x="739.00" y="63.00" width="1.00" height="5.00" fill="#fff"/>
<rect x="750.00" y="65.00" width="1.00" height="3.00" fill="#fff"/>
<rect x="760.00" y="65.00" width="1.00" height="3.00" fill="#fff"/>
<rect x="770.00" y="65.00" width="1.00" height="3.00" fill="#fff"/>
<rect x="781.00" y="65.00" width="1.00" height="3.00" fill="#fff"/>
<rect x="791.00" y="63.00" width="1.00" height="5.00" fill="#fff"/>
<rect x="802.00" y="65.00" width="1.00" height="3.00" fill="#fff"/>
<rect x="812.00" y="65.00" width="1.00" height="3.00" fill="#fff"/>
<rect x="823.00" y="65.00" width="1.00" height="3.00" fill="#fff"/>
<rect x="833.00" y="65.00" width="1.00" height="3.00" fill="#fff"/>
<rect x="843.00" y="63.00" width="1.00" height="5.00" fill="#fff"/>
<rect x="854.00" y="65.00" width="1.00" height="3.00" fill="#fff"/>
<rect x="864.00" y="65.00" width="1.00" height="3.00" fill="#fff"/>
<rect x="875.00" y="65.00" width="1.00" height="3.00" fill="#fff"/>
<rect x="885.00" y="65.00" width="1.00" height="3.00" fill="#fff"/>
<rect x="895.00" y="63.00" width="1.00" height="5.00" fill="#fff"/>
<rect x="906.00" y="65.00" width="1.00" height="3.00" fill="#fff"/>
<rect x="916.00" y="65.00" width="1.00" height="3.00" fill="#fff"/>
<rect x="927.00" y="65.00" width="1.00" height="3.00" fill="#fff"/>
<rect x="937.00" y="65.00" width="1.00" height="3.00" fill="#fff"/>
<rect x="948.00" y="63.00" width="1.00" height="5.00" fill="#fff"/>
<rect x="958.00" y="65.00" width="1.00" height="3.00" fill="#fff"/>
<rect x="968.00" y="65.00" width="1.00" height="3.00" fill="#fff"/>
<rect x="979.00" y="65.00" width="1.00" height="3.00" fill="#fff"/>
<rect x="989.00" y="65.00" width="1.00" height="3.00" fill="#fff"/>
<rect x="1000.00" y="63.00" width="1.00" height="5.00" fill="#fff"/>
<rect x="1010.00" y="65.00" width="1.00" height="3.00" fill="#fff"/>
<rect x="1021.00" y="65.00" width="1.00" height="3.00" fill="#fff"/>
<rect x="1031.00" y="65.00" width="1.00" height="3.00" fill="#fff"/>
<rect x="1041.00" y="65.00" width="1.00" height="3.00" fill="#fff"/>
<rect x="1052.00" y="63.00" width="1.00" height="5.00" fill="#fff"/>
<rect x="1062.00" y="65.00" width="1.00" height="3.00" fill="#fff"/>
<rect x="1073.00" y="65.00" width="1.00" height="3.00" fill="#fff"/>
<rect x="1083.00" y="65.00" width="1.00" height="3.00" fill="#fff"/>
<rect x="1094.00" y="65.00" width="1.00" height="3.00" fill="#fff"/>
<rect x="1104.00" y="63.00" width="1.00" height="5.00" fill="#fff"/>
<rect x="1114.00" y="65.00" width="1.00" height="3.00" fill="#fff"/>
<rect x="1125.00" y="65.00" width="1.00" height="3.00" fill="#fff"/>
<rect x="1135.00" y="65.00" width="1.00" height="3.00" fill="#fff"/>
<rect x="1146.00" y="65.00" width="1.00" height="3.00" fill="#fff"/>
<rect x="1156.00" y="63.00" width="1.00" height="5.00" fill="#fff"/>
<rect x="1166.00" y="65.00" width="1.00" height="3.00" fill="#fff"/>
<rect x="1177.00" y="65.00" width="1.00" height="3.00" fill="#fff"/>
<rect x="1187.00" y="65.00" width="1.00" height="3.00" fill="#fff"/>
<rect x="1198.00" y="65.00" width="1.00" height="3.00" fill="#fff"/>
<rect x="1208.00" y="63.00" width="1.00" height="5.00" fill="#fff"/>
<rect x="1219.00" y="65.00" width="1.00" height="3.00" fill="#fff"/>
<rect x="1229.00" y="65.00" width="1.00" height="3.00" fill="#fff"/>
<rect x="1239.00" y="65.00" width="1.00" height="3.00" fill="#fff"/>
<rect x="1250.00" y="65.00" width="1.00" height="3.00" fill="#fff"/>
<rect x="1260.00" y="63.00" width="1.00" height="5.00" fill="#fff"/>
<rect x="1271.00" y="65.00" width="1.00" height="3.00" fill="#fff"/>
<rect x="1281.00" y="65.00" width="1.00" height="3.00" fill="#fff"/>
<rect x="1292.00" y="65.00" width="1.00" height="3.00" fill="#fff"/>
<rect x="1302.00" y="65.00" width="1.00" height="3.00" fill="#fff"/>
<rect x="1312.00" y="63.00" width="1.00" height="5.00" fill="#fff"/>
<rect x="1323.00" y="65.00" width="1.00" height="3.00" fill="#fff"/>
<rect x="1333.00" y="65.00" width="1.00" height="3.00" fill="#fff"/>
<rect x="1344.00" y="65.00" width="1.00" height="3.00" fill="#fff"/>
<rect x="1354.00" y="65.00" width="1.00" height="3.00" fill="#fff"/>
<rect x="1365.00" y="63.00" width="1.00" height="5.00" fill="#fff"/>
<rect x="1375.00" y="65.00" width="1.00" height="3.00" fill="#fff"/>
<rect x="1385.00" y="65.00" width="1.00" height="3.00" fill="#fff"/>
<rect x="1396.00" y="65.00" width="1.00" height="3.00" fill="#fff"/>
<rect x="1406.00" y="65.00" width="1.00" height="3.00" fill="#fff"/>
<rect x="1417.00" y="63.00" width="1.00" height="5.00" fill="#fff"/>
<rect x="1427.00" y="65.00" width="1.00" height="3.00" fill="#fff"/>
<rect x="1437.00" y="65.00" width="1.00" height="3.00" fill="#fff"/>
<rect x="1448.00" y="65.00" width="1.00" height="3.00" fill="#fff"/>
<rect x="1458.00" y="65.00" width="1.00" height="3.00" fill="#fff"/>
<rect x="1469.00" y="63.00" width="1.00" height="5.00" fill="#fff"/>
<rect x="1479.00" y="65.00" width="1.00" height="3.00" fill="#fff"/>
<rect x="1490.00" y="65.00" width="1.00" height="3.00" fill="#fff"/>
<rect x="1500.00" y="65.00" width="1.00" height="3.00" fill="#fff"/>
<rect x="1510.00" y="65.00" width="1.00" height="3.00" fill="#fff"/>
<rect x="1521.00" y="63.00" width="1.00" height="5.00" fill="#fff"/>
<rect x="1531.00" y="65.00" width="1.00" height="3.00" fill="#fff"/>
<rect x="1542.00" y="65.00" width="1.00" height="3.00" fill="#fff"/>
<rect x="1552.00" y="65.00" width="1.00" height="3.00" fill="#fff"/>
<rect x="1563.00" y="65.00" width="1.00" height="3.00" fill="#fff"/>
<rect x="1573.00" y="63.00" width="1.00" height="5.00" fill="#fff"/>
<rect x="1583.00" y="65.00" width="1.00" height="3.00" fill="#fff"/>
<rect x="1594.00" y="65.00" width="1.00" height="3.00" fill="#fff"/>
<rect x="1604.00" y="65.00" width="1.00" height="3.00" fill="#fff"/>
<rect x="1615.00" y="65.00" width="1.00" height="3.00" fill="#fff"/>
<rect x="1625.00" y="63.00" width="1.00" height="5.00" fill="#fff"/>
<rect x="1635.00" y="65.00" width="1.00" height="3.00" fill="#fff"/>
<rect x="1646.00" y="65.00" width="1.00" height="3.00" fill="#fff"/>
<rect x="1656.00" y="65.00" width="1.00" height="3.00" fill="#fff"/>
<rect x="1667.00" y="65.00" width="1.00" height="3.00" fill="#fff"/>
<rect x="1677.00" y="63.00" width="1.00" height="5.00" fill="#fff"/>
<rect x="1688.00" y="65.00" width="1.00" height="3.00" fill="#fff"/>
<rect x="1698.00" y="65.00" width="1.00" height="3.00" fill="#fff"/>
<rect x="1708.00" y="65.00" width="1.00" height="3.00" fill="#fff"/>
<rect x="1719.00" y="65.00" width="1.00" height="3.00" fill="#fff"/>
<rect x="1729.00" y="63.00" width="1.00" height="5.00" fill="#fff"/>
<rect x="1740.00" y="65.00" width="1.00" height="3.00" fill="#fff"/>
<rect x="1750.00" y="65.00" width="1.00" height="3.00" fill="#fff"/>
<rect x="1761.00" y="65.00" width="1.00" height="3.00" fill="#fff"/>
<rect x="1771.00" y="65.00" width="1.00" height="3.00" fill="#fff"/>
<rect x="1781.00" y="63.00" width="1.00" height="5.00" fill="#fff"/>
<rect x="1792.00" y="65.00" width="1.00" height="3.00" fill="#fff"/>
<rect x="1802.00" y="65.00" width="1.00" height="3.00" fill="#fff"/>
<rect x="45.00" y="930.00" width="5.00" height="1.00" fill="#fff"/>
<rect x="1806.00" y="930.00" width="5.00" height="1.00" fill="#fff"/>
<rect x="47.00" y="919.00" width="3.00" height="1.00" fill="#fff"/>
<rect x="1806.00" y="919.00" width="3.00" height="1.00" fill="#fff"/>
<rect x="45.00" y="908.00" width="5.00" height="1.00" fill="#fff"/>
<rect x="1806.00" y="908.00" width="5.00" height="1.00" fill="#fff"/>
<rect x="47.00" y="898.00" width="3.00" height="1.00" fill="#fff"/>
<rect x="1806.00" y="898.00" width="3.00" height="1.00" fill="#fff"/>
<rect x="45.00" y="887.00" width="5.00" height="1.00" fill="#fff"/>
<rect x="1806.00" y="887.00" width="5.00" height="1.00" fill="#fff"/>
<rect x="47.00" y="876.00" width="3.00" height="1.00" fill="#fff"/>
<rect x="1806.00" y="876.00" width="3.00" height="1.00" fill="#fff"/>
<rect x="45.00" y="866.00" width="5.00" height="1.00" fill="#fff"/>
<rect x="1806.00" y="866.00" width="5.00" height="1.00" fill="#fff"/>
<rect x="47.00" y="855.00" width="3.00" height="1.00" fill="#fff"/>
<rect x="1806.00" y="855.00" width="3.00" height="1.00" fill="#fff"/>
<rect x="45.00" y="844.00" width="5.00" height="1.00" fill="#fff"/>
<rect x="1806.00" y="844.00" width="5.00" height="1.00" fill="#fff"/>
<rect x="47.00" y="833.00" width="3.00" height="1.00" fill="#fff"/>
<rect x="1806.00" y="833.00" width="3.00" height="1.00" fill="#fff"/>
<rect x="45.00" y="822.00" width="5.00" height="1.00" fill="#fff"/>
<rect x="1806.00" y="822.00" width="5.00" height="1.00" fill="#fff"/>
<rect x="47.00" y="812.00" width="3.00" height="1.00" fill="#fff"/>
<rect x="1806.00" y="812.00" width="3.00" height="1.00" fill="#fff"/>
<rect x="45.00" y="801.00" width="5.00" height="1.00" fill="#fff"/>
<rect x="1806.00" y="801.00" width="5.00" height="1.00" fill="#fff"/>
<rect x="47.00" y="790.00" width="3.00" height="1.00" fill="#fff"/>
<rect x="1806.00" y="790.00" width="3.00" height="1.00" fill="#fff"/>
<rect x="45.00" y="780.00" width="5.00" height="1.00" fill="#fff"/>
<rect x="1806.00" y="780.00" width="5.00" height="1.00" fill="#fff"/>
<rect x="47.00" y="769.00" width="3.00" height="1.00" fill="#fff"/>
<rect x="1806.00" y="769.00" width="3.00" height="1.00" fill="#fff"/>
<rect x="45.00" y="758.00" width="5.00" height="1.00" fill="#fff"/>
<rect x="1806.00" y="758.00" width="5.00" height="1.00" fill="#fff"/>
<rect x="47.00" y="747.00" width="3.00" height="1.00" fill="#fff"/>
<rect x="1806.00" y="747.00" width="3.00" height="1.00" fill="#fff"/>
<rect x="45.00" y="736.00" width="5.00" height="1.00" fill="#fff"/>
<rect x="1806.00" y="736.00" width="5.00" height="1.00" fill="#fff"/>
<rect x="47.00" y="726.00" width="3.00" height="1.00" fill="#fff"/>
<rect x="1806.00" y="726.00" width="3.00" height="1.00" fill="#fff"/>
<rect x="45.00" y="715.00" width="5.00" height="1.00" fill="#fff"/>
<rect x="1806.00" y="715.00" width="5.00" height="1.00" fill="#fff"/>
<rect x="47.00" y="704.00" width="3.00" height="1.00" fill="#fff"/>
<rect x="1806.00" y="704.00" width="3.00" height="1.00" fill="#fff"/>
<rect x="45.00" y="694.00" width="5.00" height="1.00" fill="#fff"/>
<rect x="1806.00" y="694.00" width="5.00" height="1.00" fill="#fff"/>
<rect x="47.00" y="683.00" width="3.00" height="1.00" fill="#fff"/>
<rect x="1806.00" y="683.00" width="3.00" height="1.00" fill="#fff"/>
<rect x="45.00" y="672.00" width="5.00" height="1.00" fill="#fff"/>
<rect x="1806.00" y="672.00" width="5.00" height="1.00" fill="#fff"/>
<rect x="47.00" y="661.00" width="3.00" height="1.00" fill="#fff"/>
<rect x="1806.00" y="661.00" width="3.00" height="1.00" fill="#fff"/>
<rect x="45.00" y="650.00" width="5.00" height="1.00" fill="#fff"/>
<rect x="1806.00" y="650.00" width="5.00" height="1.00" fill="#fff"/>
<rect x="47.00" y="640.00" width="3.00" height="1.00" fill="#fff"/>
<rect x="1806.00" y="640.00" width="3.00" height="1.00" fill="#fff"/>
<rect x="45.00" y="629.00" width="5.00" height="1.00" fill="#fff"/>
<rect x="1806.00" y="629.00" width="5.00" height="1.00" fill="#fff"/>
<rect x="47.00" y="618.00" width="3.00" height="1.00" fill="#fff"/>
<rect x="1806.00" y="618.00" width="3.00" height="1.00" fill="#fff"/>
<rect x="45.00" y="608.00" width="5.00" height="1.00" fill="#fff"/>
<rect x="1806.00" y="608.00" width="5.00" height="1.00" fill="#fff"/>
<rect x="47.00" y="597.00" width="3.00" height="1.00" fill="#fff"/>
<rect x="1806.00" y="597.00" width="3.00" height="1.00" fill="#fff"/>
<rect x="45.00" y="586.00" width="5.00" height="1.00" fill="#fff"/>
<rect x="1806.00" y="586.00" width="5.00" height="1.00" fill="#fff"/>
<rect x="47.00" y="575.00" width="3.00" height="1.00" fill="#fff"/>
<rect x="1806.00" y="575.00" width="3.00" height="1.00" fill="#fff"/>
<rect x="45.00" y="564.00" width="5.00" height="1.00" fill="#fff"/>
<rect x="1806.00" y="564.00" width="5.00" height="1.00" fill="#fff"/>
<rect x="47.00" y="554.00" width="3.00" height="1.00" fill="#fff"/>
<rect x="1806.00" y="554.00" width="3.00" height="1.00" fill="#fff"/>
<rect x="45.00" y="543.00" width="5.00" height="1.00" fill="#fff"/>
<rect x="1806.00" y="543.00" width="5.00" height="1.00" fill="#fff"/>
<rect x="47.00" y="532.00" width="3.00" height="1.00" fill="#fff"/>
<rect x="1806.00" y="532.00" width="3.00" height="1.00" fill="#fff"/>
<rect x="45.00" y="522.00" width="5.00" height="1.00" fill="#fff"/>
<rect x="1806.00" y="522.00" width="5.00" height="1.00" fill="#fff"/>
<rect x="47.00" y="511.00" width="3.00" height="1.00" fill="#fff"/>
<rect x="1806.00" y="511.00" width="3.00" height="1.00" fill="#fff"/>
<rect x="45.00" y="500.00" width="5.00" height="1.00" fill="#fff"/>
<rect x="1806.00" y="500.00" width="5.00" height="1.00" fill="#fff"/>
<rect x="47.00" y="489.00" width="3.00" height="1.00" fill="#fff"/>
<rect x="1806.00" y="489.00" width="3.00" height="1.00" fill="#fff"/>
<rect x="45.00" y="478.00" width="5.00" height="1.00" fill="#fff"/>
<rect x="1806.00" y="478.00" width="5.00" height="1.00" fill="#fff"/>
<rect x="47.00" y="468.00" width="3.00" height="1.00" fill="#fff"/>
<rect x="1806.00" y="468.00" width="3.00" height="1.00" fill="#fff"/>
<rect x="45.00" y="457.00" width="5.00" height="1.00" fill="#fff"/>
<rect x="1806.00" y="457.00" width="5.00" height="1.00" fill="#fff"/>
<rect x="47.00" y="446.00" width="3.00" height="1.00" fill="#fff"/>
<rect x="1806.00" y="446.00" width="3.00" height="1.00" fill="#fff"/>
<rect x="45.00" y="436.00" width="5.00" height="1.00" fill="#fff"/>
<rect x="1806.00" y="436.00" width="5.00" height="1.00" fill="#fff"/>
<rect x="47.00" y="425.00" width="3.00" height="1.00" fill="#fff"/>
<rect x="1806.00" y="425.00" width="3.00" height="1.00" fill="#fff"/>
<rect x="45.00" y="414.00" width="5.00" height="1.00" fill="#fff"/>
<rect x="1806.00" y="414.00" width="5.00" height="1.00" fill="#fff"/>
<rect x="47.00" y="403.00" width="3.00" height="1.00" fill="#fff"/>
<rect x="1806.00" y="403.00" width="3.00" height="1.00" fill="#fff"/>
<rect x="45.00" y="392.00" width="5.00" height="1.00" fill="#fff"/>
<rect x="1806.00" y="392.00" width="5.00" height="1.00" fill="#fff"/>
<rect x="47.00" y="382.00" width="3.00" height="1.00" fill="#fff"/>
<rect x="1806.00" y="382.00" width="3.00" height="1.00" fill="#fff"/>
<rect x="45.00" y="371.00" width="5.00" height="1.00" fill="#fff"/>
<rect x="1806.00" y="371.00" width="5.00" height="1.00" fill="#fff"/>
<rect x="47.00" y="360.00" width="3.00" height="1.00" fill="#fff"/>
<rect x="1806.00" y="360.00" width="3.00" height="1.00" fill="#fff"/>
<rect x="45.00" y="350.00" width="5.00" height="1.00" fill="#fff"/>
<rect x="1806.00" y="350.00" width="5.00" height="1.00" fill="#fff"/>
<rect x="47.00" y="339.00" width="3.00" height="1.00" fill="#fff"/>
<rect x="1806.00" y="339.00" width="3.00" height="1.00" fill="#fff"/>
<rect x="45.00" y="328.00" width="5.00" height="1.00" fill="#fff"/>
<rect x="1806.00" y="328.00" width="5.00" height="1.00" fill="#fff"/>
<rect x="47.00" y="317.00" width="3.00" height="1.00" fill="#fff"/>
<rect x="1806.00" y="317.00" width="3.00" height="1.00" fill="#fff"/>
<rect x="45.00" y="306.00" width="5.00" height="1.00" fill="#fff"/>
<rect x="1806.00" y="306.00" width="5.00" height="1.00" fill="#fff"/>
<rect x="47.00" y="296.00" width="3.00" height="1.00" fill="#fff"/>
<rect x="1806.00" y="296.00" width="3.00" height="1.00" fill="#fff"/>
<rect x="45.00" y="285.00" width="5.00" height="1.00" fill="#fff"/>
<rect x="1806.00" y="285.00" width="5.00" height="1.00" fill="#fff"/>
<rect x="47.00" y="274.00" width="3.00" height="1.00" fill="#fff"/>
<rect x="1806.00" y="274.00" width="3.00" height="1.00" fill="#fff"/>
<rect x="45.00" y="264.00" width="5.00" height="1.00" fill="#fff"/>
<rect x="1806.00" y="264.00" width="5.00" height="1.00" fill="#fff"/>
<rect x="47.00" y="253.00" width="3.00" height="1.00" fill="#fff"/>
<rect x="1806.00" y="253.00" width="3.00" height="1.00" fill="#fff"/>
<rect x="45.00" y="242.00" width="5.00" height="1.00" fill="#fff"/>
<rect x="1806.00" y="242.00" width="5.00" height="1.00" fill="#fff"/>
<rect x="47.00" y="231.00" width="3.00" height="1.00" fill="#fff"/>
<rect x="1806.00" y="231.00" width="3.00" height="1.00" fill="#fff"/>
<rect x="45.00" y="220.00" width="5.00" height="1.00" fill="#fff"/>
<rect x="1806.00" y="220.00" width="5.00" height="1.00" fill="#fff"/>
<rect x="47.00" y="210.00" width="3.00" height="1.00" fill="#fff"/>
<rect x="1806.00" y="210.00" width="3.00" height="1.00" fill="#fff"/>
<rect x="45.00" y="199.00" width="5.00" height="1.00" fill="#fff"/>
<rect x="1806.00" y="199.00" width="5.00" height="1.00" fill="#fff"/>
<rect x="47.00" y="188.00" width="3.00" height="1.00" fill="#fff"/>
<rect x="1806.00" y="188.00" width="3.00" height="1.00" fill="#fff"/>
<rect x="45.00" y="178.00" width="5.00" height="1.00" fill="#fff"/>
<rect x="1806.00" y="178.00" width="5.00" height="1.00" fill="#fff"/>
<rect x="47.00" y="167.00" width="3.00" height="1.00" fill="#fff"/>
<rect x="1806.00" y="167.00" width="3.00" height="1.00" fill="#fff"/>
<rect x="45.00" y="156.00" width="5.00" height="1.00" fill="#fff"/>
<rect x="1806.00" y="156.00" width="5.00" height="1.00" fill="#fff"/>
<rect x="47.00" y="145.00" width="3.00" height="1.00" fill="#fff"/>
<rect x="1806.00" y="145.00" width="3.00" height="1.00" fill="#fff"/>
<rect x="45.00" y="134.00" width="5.00" height="1.00" fill="#fff"/>
<rect x="1806.00" y="134.00" width="5.00" height="1.00" fill="#fff"/>
<rect x="47.00" y="124.00" width="3.00" height="1.00" fill="#fff"/>
<rect x="1806.00" y="124.00" width="3.00" height="1.00" fill="#fff"/>
<rect x="45.00" y="113.00" width="5.00" height="1.00" fill="#fff"/>
<rect x="1806.00" y="113.00" width="5.00" height="1.00" fill="#fff"/>
<rect x="47.00" y="102.00" width="3.00" height="1.00" fill="#fff"/>
<rect x="1806.00" y="102.00" width="3.00" height="1.00" fill="#fff"/>
<rect x="45.00" y="92.00" width="5.00" height="1.00" fill="#fff"/>
<rect x="1806.00" y="92.00" width="5.00" height="1.00" fill="#fff"/>
<rect x="47.00" y="81.00" width="3.00" height="1.00" fill="#fff"/>
<rect x="1806.00" y="81.00" width="3.00" height="1.00" fill="#fff"/>
<rect x="45.00" y="70.00" width="5.00" height="1.00" fill="#fff"/>
<rect x="1806.00" y="70.00" width="5.00" height="1.00" fill="#fff"/>
<rect x="52.00" y="933.00" width="1.00" height="5.00" fill="#fff"/>
<rect x="1803.00" y="933.00" width="1.00" height="5.00" fill="#fff"/>
<rect x="55.00" y="933.00" width="1.00" height="3.00" fill="#fff"/>
<rect x="61.00" y="933.00" width="1.00" height="3.00" fill="#fff"/>
<rect x="67.00" y="933.00" width="1.00" height="3.00" fill="#fff"/>
<rect x="74.00" y="933.00" width="1.00" height="3.00" fill="#fff"/>
<rect x="80.00" y="933.00" width="1.00" height="3.00" fill="#fff"/>
<rect x="86.00" y="933.00" width="1.00" height="3.00" fill="#fff"/>
<rect x="93.00" y="933.00" width="1.00" height="3.00" fill="#fff"/>
<rect x="99.00" y="933.00" width="1.00" height="3.00" fill="#fff"/>
<rect x="105.00" y="933.00" width="1.00" height="3.00" fill="#fff"/>
<rect x="112.00" y="933.00" width="1.00" height="3.00" fill="#fff"/>
<rect x="118.00" y="933.00" width="1.00" height="5.00" fill="#fff"/>
<rect x="125.00" y="933.00" width="1.00" height="3.00" fill="#fff"/>
<rect x="131.00" y="933.00" width="1.00" height="3.00" fill="#fff"/>
<rect x="137.00" y="933.00" width="1.00" height="3.00" fill="#fff"/>
<rect x="144.00" y="933.00" width="1.00" height="3.00" fill="#fff"/>
<rect x="150.00" y="933.00" width="1.00" height="3.00" fill="#fff"/>
<rect x="156.00" y="933.00" width="1.00" height="3.00" fill="#fff"/>
<rect x="163.00" y="933.00" width="1.00" height="3.00" fill="#fff"/>
<rect x="169.00" y="933.00" width="1.00" height="3.00" fill="#fff"/>
<rect x="175.00" y="933.00" width="1.00" height="3.00" fill="#fff"/>
<rect x="182.00" y="933.00" width="1.00" height="3.00" fill="#fff"/>
<rect x="188.00" y="933.00" width="1.00" height="3.00" fill="#fff"/>
<rect x="195.00" y="933.00" width="1.00" height="5.00" fill="#fff"/>
<rect x="201.00" y="933.00" width="1.00" height="3.00" fill="#fff"/>
<rect x="207.00" y="933.00" width="1.00" height="3.00" fill="#fff"/>
<rect x="214.00" y="933.00" width="1.00" height="3.00" fill="#fff"/>
<rect x="220.00" y="933.00" width="1.00" height="3.00" fill="#fff"/>
<rect x="226.00" y="933.00" width="1.00" height="3.00" fill="#fff"/>
<rect x="233.00" y="933.00" width="1.00" height="3.00" fill="#fff"/>
<rect x="239.00" y="933.00" width="1.00" height="3.00" fill="#fff"/>
<rect x="245.00" y="933.00" width="1.00" height="3.00" fill="#fff"/>
<rect x="252.00" y="933.00" width="1.00" height="3.00" fill="#fff"/>
<rect x="258.00" y="933.00" width="1.00" height="3.00" fill="#fff"/>
<rect x="265.00" y="933.00" width="1.00" height="3.00" fill="#fff"/>
<rect x="271.00" y="933.00" width="1.00" height="5.00" fill="#fff"/>
<rect x="277.00" y="933.00" width="1.00" height="3.00" fill="#fff"/>
<rect x="284.00" y="933.00" width="1.00" height="3.00" fill="#fff"/>
<rect x="290.00" y="933.00" width="1.00" height="3.00" fill="#fff"/>
<rect x="296.00" y="933.00" width="1.00" height="3.00" fill="#fff"/>
<rect x="303.00" y="933.00" width="1.00" height="3.00" fill="#fff"/>
<rect x="309.00" y="933.00" width="1.00" height="3.00" fill="#fff"/>
<rect x="315.00" y="933.00" width="1.00" height="3.00" fill="#fff"/>
<rect x="322.00" y="933.00" width="1.00" height="3.00" fill="#fff"/>
<rect x="328.00" y="933.00" width="1.00" height="3.00" fill="#fff"/>
<rect x="334.00" y="933.00" width="1.00" height="3.00" fill="#fff"/>
<rect x="341.00" y="933.00" width="1.00" height="3.00" fill="#fff"/>
<rect x="347.00" y="933.00" width="1.00" height="5.00" fill="#fff"/>
<rect x="354.00" y="933.00" width="1.00" height="3.00" fill="#fff"/>
<rect x="360.00" y="933.00" width="1.00" height="3.00" fill="#fff"/>
<rect x="366.00" y="933.00" width="1.00" height="3.00" fill="#fff"/>
<rect x="373.00" y="933.00" width="1.00" height="3.00" fill="#fff"/>
<rect x="379.00" y="933.00" width="1.00" height="3.00" fill="#fff"/>
<rect x="385.00" y="933.00" width="1.00" height="3.00" fill="#fff"/>
<rect x="392.00" y="933.00" width="1.00" height="3.00" fill="#fff"/>
<rect x="398.00" y="933.00" width="1.00" height="3.00" fill="#fff"/>
<rect x="404.00" y="933.00" width="1.00" height="3.00" fill="#fff"/>
<rect x="411.00" y="933.00" width="1.00" height="3.00" fill="#fff"/>
<rect x="417.00" y="933.00" width="1.00" height="3.00" fill="#fff"/>
<rect x="424.00" y="933.00" width="1.00" height="5.00" fill="#fff"/>
<rect x="430.00" y="933.00" width="1.00" height="3.00" fill="#fff"/>
<rect x="436.00" y="933.00" width="1.00" height="3.00" fill="#fff"/>
<rect x="443.00" y="933.00" width="1.00" height="3.00" fill="#fff"/>
<rect x="449.00" y="933.00" width="1.00" height="3.00" fill="#fff"/>
<rect x="455.00" y="933.00" width="1.00" height="3.00" fill="#fff"/>
<rect x="462.00" y="933.00" width="1.00" height="3.00" fill="#fff"/>
<rect x="468.00" y="933.00" width="1.00" height="3.00" fill="#fff"/>
<rect x="474.00" y="933.00" width="1.00" height="3.00" fill="#fff"/>
<rect x="481.00" y="933.00" width="1.00" height="3.00" fill="#fff"/>
<rect x="487.00" y="933.00" width="1.00" height="3.00" fill="#fff"/>
<rect x="494.00" y="933.00" width="1.00" height="3.00" fill="#fff"/>
<rect x="500.00" y="933.00" width="1.00" height="5.00" fill="#fff"/>
<rect x="506.00" y="933.00" width="1.00" height="3.00" fill="#fff"/>
<rect x="513.00" y="933.00" width="1.00" height="3.00" fill="#fff"/>
<rect x="519.00" y="933.00" width="1.00" height="3.00" fill="#fff"/>
<rect x="525.00" y="933.00" width="1.00" height="3.00" fill="#fff"/>
<rect x="532.00" y="933.00" width="1.00" height="3.00" fill="#fff"/>
<rect x="538.00" y="933.00" width="1.00" height="3.00" fill="#fff"/>
<rect x="544.00" y="933.00" width="1.00" height="3.00" fill="#fff"/>
<rect x="551.00" y="933.00" width="1.00" height="3.00" fill="#fff"/>
<rect x="557.00" y="933.00" width="1.00" height="3.00" fill="#fff"/>
<rect x="564.00" y="933.00" width="1.00" height="3.00" fill="#fff"/>
<rect x="570.00" y="933.00" width="1.00" height="3.00" fill="#fff"/>
<rect x="576.00" y="933.00" width="1.00" height="5.00" fill="#fff"/>
<rect x="583.00" y="933.00" width="1.00" height="3.00" fill="#fff"/>
<rect x="589.00" y="933.00" width="1.00" height="3.00" fill="#fff"/>
<rect x="595.00" y="933.00" width="1.00" height="3.00" fill="#fff"/>
<rect x="602.00" y="933.00" width="1.00" height="3.00" fill="#fff"/>
<rect x="608.00" y="933.00" width="1.00" height="3.00" fill="#fff"/>
<rect x="614.00" y="933.00" width="1.00" height="3.00" fill="#fff"/>
<rect x="621.00" y="933.00" width="1.00" height="3.00" fill="#fff"/>
<rect x="627.00" y="933.00" width="1.00" height="3.00" fill="#fff"/>
<rect x="633.00" y="933.00" width="1.00" height="3.00" fill="#fff"/>
<rect x="640.00" y="933.00" width="1.00" height="3.00" fill="#fff"/>
<rect x="646.00" y="933.00" width="1.00" height="3.00" fill="#fff"/>
<rect x="653.00" y="933.00" width="1.00" height="5.00" fill="#fff"/>
<rect x="659.00" y="933.00" width="1.00" height="3.00" fill="#fff"/>
<rect x="665.00" y="933.00" width="1.00" height="3.00" fill="#fff"/>
<rect x="672.00" y="933.00" width="1.00" height="3.00" fill="#fff"/>
<rect x="678.00" y="933.00" width="1.00" height="3.00" fill="#fff"/>
<rect x="684.00" y="933.00" width="1.00" height="3.00" fill="#fff"/>
<rect x="691.00" y="933.00" width="1.00" height="3.00" fill="#fff"/>
<rect x="697.00" y="933.00" width="1.00" height="3.00" fill="#fff"/>
<rect x="703.00" y="933.00" width="1.00" height="3.00" fill="#fff"/>
<rect x="710.00" y="933.00" width="1.00" height="3.00" fill="#fff"/>
<rect x="716.00" y="933.00" width="1.00" height="3.00" fill="#fff"/>
<rect x="723.00" y="933.00" width="1.00" height="3.00" fill="#fff"/>
<rect x="729.00" y="933.00" width="1.00" height="5.00" fill="#fff"/>
<rect x="735.00" y="933.00" width="1.00" height="3.00" fill="#fff"/>
<rect x="742.00" y="933.00" width="1.00" height="3.00" fill="#fff"/>
<rect x="748.00" y="933.00" width="1.00" height="3.00" fill="#fff"/>
<rect x="754.00" y="933.00" width="1.00" height="3.00" fill="#fff"/>
<rect x="761.00" y="933.00" width="1.00" height="3.00" fill="#fff"/>
<rect x="767.00" y="933.00" width="1.00" height="3.00" fill="#fff"/>
<rect x="773.00" y="933.00" width="1.00" height="3.00" fill="#fff"/>
<rect x="780.00" y="933.00" width="1.00" height="3.00" fill="#fff"/>
<rect x="786.00" y="933.00" width="1.00" height="3.00" fill="#fff"/>
<rect x="793.00" y="933.00" width="1.00" height="3.00" fill="#fff"/>
<rect x="799.00" y="933.00" width="1.00" height="3.00" fill="#fff"/>
<rect x="805.00" y="933.00" width="1.00" height="5.00" fill="#fff"/>
<rect x="812.00" y="933.00" width="1.00" height="3.00" fill="#fff"/>
<rect x="818.00" y="933.00" width="1.00" height="3.00" fill="#fff"/>
<rect x="824.00" y="933.00" width="1.00" height="3.00" fill="#fff"/>
<rect x="831.00" y="933.00" width="1.00" height="3.00" fill="#fff"/>
<rect x="837.00" y="933.00" width="1.00" height="3.00" fill="#fff"/>
<rect x="843.00" y="933.00" width="1.00" height="3.00" fill="#fff"/>
<rect x="850.00" y="933.00" width="1.00" height="3.00" fill="#fff"/>
<rect x="856.00" y="933.00" width="1.00" height="3.00" fill="#fff"/>
<rect x="863.00" y="933.00" width="1.00" height="3.00" fill="#fff"/>
<rect x="869.00" y="933.00" width="1.00" height="3.00" fill="#fff"/>
<rect x="875.00" y="933.00" width="1.00" height="3.00" fill="#fff"/>
<rect x="882.00" y="933.00" width="1.00" height="5.00" fill="#fff"/>
<rect x="888.00" y="933.00" width="1.00" height="3.00" fill="#fff"/>
<rect x="894.00" y="933.00" width="1.00" height="3.00" fill="#fff"/>
<rect x="901.00" y="933.00" width="1.00" height="3.00" fill="#fff"/>
<rect x="907.00" y="933.00" width="1.00" height="3.00" fill="#fff"/>
<rect x="913.00" y="933.00" width="1.00" height="3.00" fill="#fff"/>
<rect x="920.00" y="933.00" width="1.00" height="3.00" fill="#fff"/>
<rect x="926.00" y="933.00" width="1.00" height="3.00" fill="#fff"/>
<rect x="932.00" y="933.00" width="1.00" height="3.00" fill="#fff"/>
<rect x="939.00" y="933.00" width="1.00" height="3.00" fill="#fff"/>
<rect x="945.00" y="933.00" width="1.00" height="3.00" fill="#fff"/>
<rect x="952.00" y="933.00" width="1.00" height="3.00" fill="#fff"/>
<rect x="958.00" y="933.00" width="1.00" height="5.00" fill="#fff"/>
<rect x="964.00" y="933.00" width="1.00" height="3.00" fill="#fff"/>
<rect x="971.00" y="933.00" width="1.00" height="3.00" fill="#fff"/>
<rect x="977.00" y="933.00" width="1.00" height="3.00" fill="#fff"/>
<rect x="983.00" y="933.00" width="1.00" height="3.00" fill="#fff"/>
<rect x="990.00" y="933.00" width="1.00" height="3.00" fill="#fff"/>
<rect x="996.00" y="933.00" width="1.00" height="3.00" fill="#fff"/>
<rect x="1002.00" y="933.00" width="1.00" height="3.00" fill="#fff"/>
<rect x="1009.00" y="933.00" width="1.00" height="3.00" fill="#fff"/>
<rect x="1015.00" y="933.00" width="1.00" height="3.00" fill="#fff"/>
<rect x="1022.00" y="933.00" width="1.00" height="3.00" fill="#fff"/>
<rect x="1028.00" y="933.00" width="1.00" height="3.00" fill="#fff"/>
<rect x="1034.00" y="933.00" width="1.00" height="5.00" fill="#fff"/>
<rect x="1041.00" y="933.00" width="1.00" height="3.00" fill="#fff"/>
<rect x="1047.00" y="933.00" width="1.00" height="3.00" fill="#fff"/>
<rect x="1053.00" y="933.00" width="1.00" height="3.00" fill="#fff"/>
<rect x="1060.00" y="933.00" width="1.00" height="3.00" fill="#fff"/>
<rect x="1066.00" y="933.00" width="1.00" height="3.00" fill="#fff"/>
<rect x="1072.00" y="933.00" width="1.00" height="3.00" fill="#fff"/>
<rect x="1079.00" y="933.00" width="1.00" height="3.00" fill="#fff"/>
<rect x="1085.00" y="933.00" width="1.00" height="3.00" fill="#fff"/>
<rect x="1092.00" y="933.00" width="1.00" height="3.00" fill="#fff"/>
<rect x="1098.00" y="933.00" width="1.00" height="3.00" fill="#fff"/>
<rect x="1104.00" y="933.00" width="1.00" height="3.00" fill="#fff"/>
<rect x="1111.00" y="933.00" width="1.00" height="5.00" fill="#fff"/>
<rect x="1117.00" y="933.00" width="1.00" height="3.00" fill="#fff"/>
<rect x="1123.00" y="933.00" width="1.00" height="3.00" fill="#fff"/>
<rect x="1130.00" y="933.00" width="1.00" height="3.00" fill="#fff"/>
<rect x="1136.00" y="933.00" width="1.00" height="3.00" fill="#fff"/>
<rect x="1142.00" y="933.00" width="1.00" height="3.00" fill="#fff"/>
<rect x="1149.00" y="933.00" width="1.00" height="3.00" fill="#fff"/>
<rect x="1155.00" y="933.00" width="1.00" height="3.00" fill="#fff"/>
<rect x="1161.00" y="933.00" width="1.00" height="3.00" fill="#fff"/>
<rect x="1168.00" y="933.00" width="1.00" height="3.00" fill="#fff"/>
<rect x="1174.00" y="933.00" width="1.00" height="3.00" fill="#fff"/>
<rect x="1181.00" y="933.00" width="1.00" height="3.00" fill="#fff"/>
<rect x="1187.00" y="933.00" width="1.00" height="5.00" fill="#fff"/>
<rect x="1193.00" y="933.00" width="1.00" height="3.00" fill="#fff"/>
<rect x="1200.00" y="933.00" width="1.00" height="3.00" fill="#fff"/>
<rect x="1206.00" y="933.00" width="1.00" height="3.00" fill="#fff"/>
<rect x="1212.00" y="933.00" width="1.00" height="3.00" fill="#fff"/>
<rect x="1219.00" y="933.00" width="1.00" height="3.00" fill="#fff"/>
<rect x="1225.00" y="933.00" width="1.00" height="3.00" fill="#fff"/>
<rect x="1231.00" y="933.00" width="1.00" height="3.00" fill="#fff"/>
<rect x="1238.00" y="933.00" width="1.00" height="3.00" fill="#fff"/>
<rect x="1244.00" y="933.00" width="1.00" height="3.00" fill="#fff"/>
<rect x="1251.00" y="933.00" width="1.00" height="3.00" fill="#fff"/>
<rect x="1257.00" y="933.00" width="1.00" height="3.00" fill="#fff"/>
<rect x="1263.00" y="933.00" width="1.00" height="5.00" fill="#fff"/>
<rect x="1270.00" y="933.00" width="1.00" height="3.00" fill="#fff"/>
<rect x="1276.00" y="933.00" width="1.00" height="3.00" fill="#fff"/>
<rect x="1282.00" y="933.00" width="1.00" height="3.00" fill="#fff"/>
<rect x="1289.00" y="933.00" width="1.00" height="3.00" fill="#fff"/>
<rect x="1295.00" y="933.00" width="1.00" height="3.00" fill="#fff"/>
<rect x="1301.00" y="933.00" width="1.00" height="3.00" fill="#fff"/>
<rect x="1308.00" y="933.00" width="1.00" height="3.00" fill="#fff"/>
<rect x="1314.00" y="933.00" width="1.00" height="3.00" fill="#fff"/>
<rect x="1321.00" y="933.00" width="1.00" height="3.00" fill="#fff"/>
<rect x="1327.00" y="933.00" width="1.00" height="3.00" fill="#fff"/>
<rect x="1333.00" y="933.00" width="1.00" height="3.00" fill="#fff"/>
<rect x="1340.00" y="933.00" width="1.00" height="5.00" fill="#fff"/>
<rect x="1346.00" y="933.00" width="1.00" height="3.00" fill="#fff"/>
<rect x="1352.00" y="933.00" width="1.00" height="3.00" fill="#fff"/>
<rect x="1359.00" y="933.00" width="1.00" height="3.00" fill="#fff"/>
<rect x="1365.00" y="933.00" width="1.00" height="3.00" fill="#fff"/>
<rect x="1371.00" y="933.00" width="1.00" height="3.00" fill="#fff"/>
<rect x="1378.00" y="933.00" width="1.00" height="3.00" fill="#fff"/>
<rect x="1384.00" y="933.00" width="1.00" height="3.00" fill="#fff"/>
<rect x="1391.00" y="933.00" width="1.00" height="3.00" fill="#fff"/>
<rect x="1397.00" y="933.00" width="1.00" height="3.00" fill="#fff"/>
<rect x="1403.00" y="933.00" width="1.00" height="3.00" fill="#fff"/>
<rect x="1410.00" y="933.00" width="1.00" height="3.00" fill="#fff"/>
<rect x="1416.00" y="933.00" width="1.00" height="5.00" fill="#fff"/>
<rect x="1422.00" y="933.00" width="1.00" height="3.00" fill="#fff"/>
<rect x="1429.00" y="933.00" width="1.00" height="3.00" fill="#fff"/>
<rect x="1435.00" y="933.00" width="1.00" height="3.00" fill="#fff"/>
<rect x="1441.00" y="933.00" width="1.00" height="3.00" fill="#fff"/>
<rect x="1448.00" y="933.00" width="1.00" height="3.00" fill="#fff"/>
<rect x="1454.00" y="933.00" width="1.00" height="3.00" fill="#fff"/>
<rect x="1460.00" y="933.00" width="1.00" height="3.00" fill="#fff"/>
<rect x="1467.00" y="933.00" width="1.00" height="3.00" fill="#fff"/>
<rect x="1473.00" y="933.00" width="1.00" height="3.00" fill="#fff"/>
<rect x="1480.00" y="933.00" width="1.00" height="3.00" fill="#fff"/>
<rect x="1486.00" y="933.00" width="1.00" height="3.00" fill="#fff"/>
<rect x="1492.00" y="933.00" width="1.00" height="5.00" fill="#fff"/>
<rect x="1499.00" y="933.00" width="1.00" height="3.00" fill="#fff"/>
<rect x="1505.00" y="933.00" width="1.00" height="3.00" fill="#fff"/>
<rect x="1511.00" y="933.00" width="1.00" height="3.00" fill="#fff"/>
<rect x="1518.00" y="933.00" width="1.00" height="3.00" fill="#fff"/>
<rect x="1524.00" y="933.00" width="1.00" height="3.00" fill="#fff"/>
<rect x="1530.00" y="933.00" width="1.00" height="3.00" fill="#fff"/>
<rect x="1537.00" y="933.00" width="1.00" height="3.00" fill="#fff"/>
<rect x="1543.00" y="933.00" width="1.00" height="3.00" fill="#fff"/>
<rect x="1550.00" y="933.00" width="1.00" height="3.00" fill="#fff"/>
<rect x="1556.00" y="933.00" width="1.00" height="3.00" fill="#fff"/>
<rect x="1562.00" y="933.00" width="1.00" height="3.00" fill="#fff"/>
<rect x="1569.00" y="933.00" width="1.00" height="5.00" fill="#fff"/>
<rect x="1575.00" y="933.00" width="1.00" height="3.00" fill="#fff"/>
<rect x="1581.00" y="933.00" width="1.00" height="3.00" fill="#fff"/>
<rect x="1588.00" y="933.00" width="1.00" height="3.00" fill="#fff"/>
<rect x="1594.00" y="933.00" width="1.00" height="3.00" fill="#fff"/>
<rect x="1600.00" y="933.00" width="1.00" height="3.00" fill="#fff"/>
<rect x="1607.00" y="933.00" width="1.00" height="3.00" fill="#fff"/>
<rect x="1613.00" y="933.00" width="1.00" height="3.00" fill="#fff"/>
<rect x="1620.00" y="933.00" width="1.00" height="3.00" fill="#fff"/>
<rect x="1626.00" y="933.00" width="1.00" height="3.00" fill="#fff"/>
<rect x="1632.00" y="933.00" width="1.00" height="3.00" fill="#fff"/>
<rect x="1639.00" y="933.00" width="1.00" height="3.00" fill="#fff"/>
<rect x="1645.00" y="933.00" width="1.00" height="5.00" fill="#fff"/>
<rect x="1651.00" y="933.00" width="1.00" height="3.00" fill="#fff"/>
<rect x="1658.00" y="933.00" width="1.00" height="3.00" fill="#fff"/>
<rect x="1664.00" y="933.00" width="1.00" height="3.00" fill="#fff"/>
<rect x="1670.00" y="933.00" width="1.00" height="3.00" fill="#fff"/>
<rect x="1677.00" y="933.00" width="1.00" height="3.00" fill="#fff"/>
<rect x="1683.00" y="933.00" width="1.00" height="3.00" fill="#fff"/>
<rect x="1689.00" y="933.00" width="1.00" height="3.00" fill="#fff"/>
<rect x="1696.00" y="933.00" width="1.00" height="3.00" fill="#fff"/>
<rect x="1702.00" y="933.00" width="1.00" height="3.00" fill="#fff"/>
<rect x="1709.00" y="933.00" width="1.00" height="3.00" fill="#fff"/>
<rect x="1715.00" y="933.00" width="1.00" height="3.00" fill="#fff"/>
<rect x="1721.00" y="933.00" width="1.00" height="5.00" fill="#fff"/>
<rect x="1728.00" y="933.00" width="1.00" height="3.00" fill="#fff"/>
<rect x="1734.00" y="933.00" width="1.00" height="3.00" fill="#fff"/>
<rect x="1740.00" y="933.00" width="1.00" height="3.00" fill="#fff"/>
<rect x="1747.00" y="933.00" width="1.00" height="3.00" fill="#fff"/>
<rect x="1753.00" y="933.00" width="1.00" height="3.00" fill="#fff"/>
<rect x="1759.00" y="933.00" width="1.00" height="3.00" fill="#fff"/>
<rect x="1766.00" y="933.00" width="1.00" height="3.00" fill="#fff"/>
<rect x="1772.00" y="933.00" width="1.00" height="3.00" fill="#fff"/>
<rect x="1779.00" y="933.00" width="1.00" height="3.00" fill="#fff"/>
<rect x="1785.00" y="933.00" width="1.00" height="3.00" fill="#fff"/>
<rect x="1791.00" y="933.00" width="1.00" height="3.00" fill="#fff"/>
<rect x="1798.00" y="933.00" width="1.00" height="5.00" fill="#fff"/>
<rect x="1841.00" y="74.00" width="18.00" height="3.00" fill="#ee4a86"/>
<rect x="1841.00" y="937.00" width="18.00" height="3.00" fill="#ffffff"/>
</g>
<text x="51.70" y="61.00" text-anchor="middle">2641</text>
<text x="113.99" y="61.00" text-anchor="middle">2700</text>
<text x="166.11" y="61.00" text-anchor="middle">2750</text>
<text x="218.22" y="61.00" text-anchor="middle">2800</text>
<text x="270.33" y="61.00" text-anchor="middle">2850</text>
<text x="322.45" y="61.00" text-anchor="middle">2900</text>
<text x="374.56" y="61.00" text-anchor="middle">2950</text>
<text x="426.67" y="61.00" text-anchor="middle">3000</text>
<text x="478.79" y="61.00" text-anchor="middle">3050</text>
<text x="530.90" y="61.00" text-anchor="middle">3100</text>
<text x="583.01" y="61.00" text-anchor="middle">3150</text>
<text x="635.12" y="61.00" text-anchor="middle">3200</text>
<text x="687.24" y="61.00" text-anchor="middle">3250</text>
<text x="739.35" y="61.00" text-anchor="middle">3300</text>
<text x="791.46" y="61.00" text-anchor="middle">3350</text>
<text x="843.58" y="61.00" text-anchor="middle">3400</text>
<text x="895.69" y="61.00" text-anchor="middle">3450</text>
<text x="947.80" y="61.00" text-anchor="middle">3500</text>
<text x="999.92" y="61.00" text-anchor="middle">3550</text>
<text x="1052.03" y="61.00" text-anchor="middle">3600</text>
<text x="1104.14" y="61.00" text-anchor="middle">3650</text>
<text x="1156.26" y="61.00" text-anchor="middle">3700</text>
<text x="1208.37" y="61.00" text-anchor="middle">3750</text>
<text x="1260.48" y="61.00" text-anchor="middle">3800</text>
<text x="1312.59" y="61.00" text-anchor="middle">3850</text>
<text x="1364.71" y="61.00" text-anchor="middle">3900</text>
<text x="1416.82" y="61.00" text-anchor="middle">3950</text>
<text x="1468.93" y="61.00" text-anchor="middle">4000</text>
<text x="1521.05" y="61.00" text-anchor="middle">4050</text>
<text x="1573.16" y="61.00" text-anchor="middle">4100</text>
<text x="1625.27" y="61.00" text-anchor="middle">4150</text>
<text x="1677.39" y="61.00" text-anchor="middle">4200</text>
<text x="1729.50" y="61.00" text-anchor="middle">4250</text>
<text x="1802.70" y="61.00" text-anchor="middle">4321</text>
<text x="43.20" y="933.90" text-anchor="end">0</text>
<text x="43.20" y="912.40" text-anchor="end">5</text>
<text x="43.20" y="890.90" text-anchor="end">10</text>
<text x="43.20" y="869.40" text-anchor="end">15</text>
<text x="43.20" y="847.90" text-anchor="end">20</text>
<text x="43.20" y="826.40" text-anchor="end">25</text>
<text x="43.20" y="804.90" text-anchor="end">30</text>
<text x="43.20" y="783.40" text-anchor="end">35</text>
<text x="43.20" y="761.90" text-anchor="end">40</text>
<text x="43.20" y="740.40" text-anchor="end">45</text>
<text x="43.20" y="718.90" text-anchor="end">50</text>
<text x="43.20" y="697.40" text-anchor="end">55</text>
<text x="43.20" y="675.90" text-anchor="end">60</text>
<text x="43.20" y="654.40" text-anchor="end">65</text>
<text x="43.20" y="632.90" text-anchor="end">70</text>
<text x="43.20" y="611.40" text-anchor="end">75</text>
<text x="43.20" y="589.90" text-anchor="end">80</text>
<text x="43.20" y="568.40" text-anchor="end">85</text>
<text x="43.20" y="546.90" text-anchor="end">90</text>
<text x="43.20" y="525.40" text-anchor="end">95</text>
<text x="43.20" y="503.90" text-anchor="end">100</text>
<text x="43.20" y="482.40" text-anchor="end">105</text>
<text x="43.20" y="460.90" text-anchor="end">110</text>
<text x="43.20" y="439.40" text-anchor="end">115</text>
<text x="43.20" y="417.90" text-anchor="end">120</text>
<text x="43.20" y="396.40" text-anchor="end">125</text>
<text x="43.20" y="374.90" text-anchor="end">130</text>
<text x="43.20" y="353.40" text-anchor="end">135</text>
<text x="43.20" y="331.90" text-anchor="end">140</text>
<text x="43.20" y="310.40" text-anchor="end">145</text>
<text x="43.20" y="288.90" text-anchor="end">150</text>
<text x="43.20" y="267.40" text-anchor="end">155</text>
<text x="43.20" y="245.90" text-anchor="end">160</text>
<text x="43.20" y="224.40" text-anchor="end">165</text>
<text x="43.20" y="202.90" text-anchor="end">170</text>
<text x="43.20" y="181.40" text-anchor="end">175</text>
<text x="43.20" y="159.90" text-anchor="end">180</text>
<text x="43.20" y="138.40" text-anchor="end">185</text>
<text x="43.20" y="116.90" text-anchor="end">190</text>
<text x="43.20" y="95.40" text-anchor="end">195</text>
<text x="43.20" y="73.90" text-anchor="end">200</text>
<text x="52.00" y="948.00" text-anchor="middle">21:25:39.800</text>
<text x="52.00" y="960.00" text-anchor="middle">04/16/2026</text>
<text x="118.21" y="948.00" text-anchor="middle">21:30:00.000</text>
<text x="118.21" y="960.00" text-anchor="middle">04/16/2026</text>
<text x="194.55" y="948.00" text-anchor="middle">21:35:00.000</text>
<text x="194.55" y="960.00" text-anchor="middle">04/16/2026</text>
<text x="270.89" y="948.00" text-anchor="middle">21:40:00.000</text>
<text x="270.89" y="960.00" text-anchor="middle">04/16/2026</text>
<text x="347.22" y="948.00" text-anchor="middle">21:45:00.000</text>
<text x="347.22" y="960.00" text-anchor="middle">04/16/2026</text>
<text x="423.56" y="948.00" text-anchor="middle">21:50:00.000</text>
<text x="423.56" y="960.00" text-anchor="middle">04/16/2026</text>
<text x="499.90" y="948.00" text-anchor="middle">21:55:00.000</text>
<text x="499.90" y="960.00" text-anchor="middle">04/16/2026</text>
<text x="576.24" y="948.00" text-anchor="middle">22:00:00.000</text>
<text x="576.24" y="960.00" text-anchor="middle">04/16/2026</text>
<text x="652.57" y="948.00" text-anchor="middle">22:05:00.000</text>
<text x="652.57" y="960.00" text-anchor="middle">04/16/2026</text>
<text x="728.91" y="948.00" text-anchor="middle">22:10:00.000</text>
<text x="728.91" y="960.00" text-anchor="middle">04/16/2026</text>
<text x="805.25" y="948.00" text-anchor="middle">22:15:00.000</text>
<text x="805.25" y="960.00" text-anchor="middle">04/16/2026</text>
<text x="881.59" y="948.00" text-anchor="middle">22:20:00.000</text>
<text x="881.59" y="960.00" text-anchor="middle">04/16/2026</text>
<text x="957.92" y="948.00" text-anchor="middle">22:25:00.000</text>
<text x="957.92" y="960.00" text-anchor="middle">04/16/2026</text>
<text x="1034.26" y="948.00" text-anchor="middle">22:30:00.000</text>
<text x="1034.26" y="960.00" text-anchor="middle">04/16/2026</text>
<text x="1110.60" y="948.00" text-anchor="middle">22:35:00.000</text>
<text x="1110.60" y="960.00" text-anchor="middle">04/16/2026</text>
<text x="1186.94" y="948.00" text-anchor="middle">22:40:00.000</text>
<text x="1186.94" y="960.00" text-anchor="middle">04/16/2026</text>
<text x="1263.27" y="948.00" text-anchor="middle">22:45:00.000</text>
<text x="1263.27" y="960.00" text-anchor="middle">04/16/2026</text>
<text x="1339.61" y="948.00" text-anchor="middle">22:50:00.000</text>
<text x="1339.61" y="960.00" text-anchor="middle">04/16/2026</text>
<text x="1415.95" y="948.00" text-anchor="middle">22:55:00.000</text>
<text x="1415.95" y="960.00" text-anchor="middle">04/16/2026</text>
<text x="1492.29" y="948.00" text-anchor="middle">23:00:00.000</text>
<text x="1492.29" y="960.00" text-anchor="middle">04/16/2026</text>
<text x="1568.62" y="948.00" text-anchor="middle">23:05:00.000</text>
<text x="1568.62" y="960.00" text-anchor="middle">04/16/2026</text>
<text x="1644.96" y="948.00" text-anchor="middle">23:10:00.000</text>
<text x="1644.96" y="960.00" text-anchor="middle">04/16/2026</text>
<text x="1721.30" y="948.00" text-anchor="middle">23:15:00.000</text>
<text x="1721.30" y="960.00" text-anchor="middle">04/16/2026</text>
<text x="1803.00" y="948.00" text-anchor="middle">23:20:21.080</text>
<text x="1803.00" y="960.00" text-anchor="middle">04/16/2026</text>
<text x="914.70" y="974.00" text-anchor="start" textLength="19.8" lengthAdjust="spacingAndGlyphs">Time</text>
<text x="1868.50" y="82.50" text-anchor="start">-5.00</text>
<text x="1868.50" y="511.00" text-anchor="start">-9.00</text>
<text x="1868.50" y="939.00" text-anchor="start">-13.00</text>
<text transform="translate(1909,444.3) rotate(90)" x="0" y="0" textLength="126.5" lengthAdjust="spacingAndGlyphs">Amplitude(Log10(g^2/Hz))</text>
<text x="808.60" y="16.00" text-anchor="start" font-weight="bold" textLength="22.8" lengthAdjust="spacingAndGlyphs">AOS</text>
<text x="837.60" y="16.00" text-anchor="start" font-weight="bold" textLength="126.6" lengthAdjust="spacingAndGlyphs">Thu 16 Apr 2026 23:20:10</text>
<text x="970.40" y="16.00" text-anchor="start" font-weight="bold" textLength="22.8" lengthAdjust="spacingAndGlyphs">AOS</text>
<text x="717.20" y="28.00" text-anchor="start" font-weight="bold" textLength="105.7" lengthAdjust="spacingAndGlyphs">CoordSystem:121f03</text>
<text x="831.20" y="28.00" text-anchor="start" font-weight="bold" textLength="82.3" lengthAdjust="spacingAndGlyphs">SensorID:121f03</text>
<text x="925.40" y="28.00" text-anchor="start" font-weight="bold" textLength="48.0" lengthAdjust="spacingAndGlyphs">Axis:sum</text>
<text x="985.60" y="28.00" text-anchor="start" font-weight="bold" textLength="98.3" lengthAdjust="spacingAndGlyphs">Windowing:Hanning</text>
<text x="618.00" y="40.00" text-anchor="start" font-weight="bold" textLength="78.8" lengthAdjust="spacingAndGlyphs">Cuttoff(Hz):200</text>
<text x="714.30" y="40.00" text-anchor="start" font-weight="bold" textLength="67.2" lengthAdjust="spacingAndGlyphs">df(Hz):0.2441</text>
<text x="799.30" y="40.00" text-anchor="start" font-weight="bold" textLength="80.6" lengthAdjust="spacingAndGlyphs">Sample/Sec:500</text>
<text x="900.30" y="40.00" text-anchor="start" font-weight="bold" textLength="72.0" lengthAdjust="spacingAndGlyphs">PSD size:2048</text>
<text x="993.40" y="40.00" text-anchor="start" font-weight="bold" textLength="64.6" lengthAdjust="spacingAndGlyphs">Overlap(%):0</text>
<text x="1081.20" y="40.00" text-anchor="start" font-weight="bold" textLength="102.5" lengthAdjust="spacingAndGlyphs">TimeRes.(sec):4.096</text>
</svg>
</body></html>
